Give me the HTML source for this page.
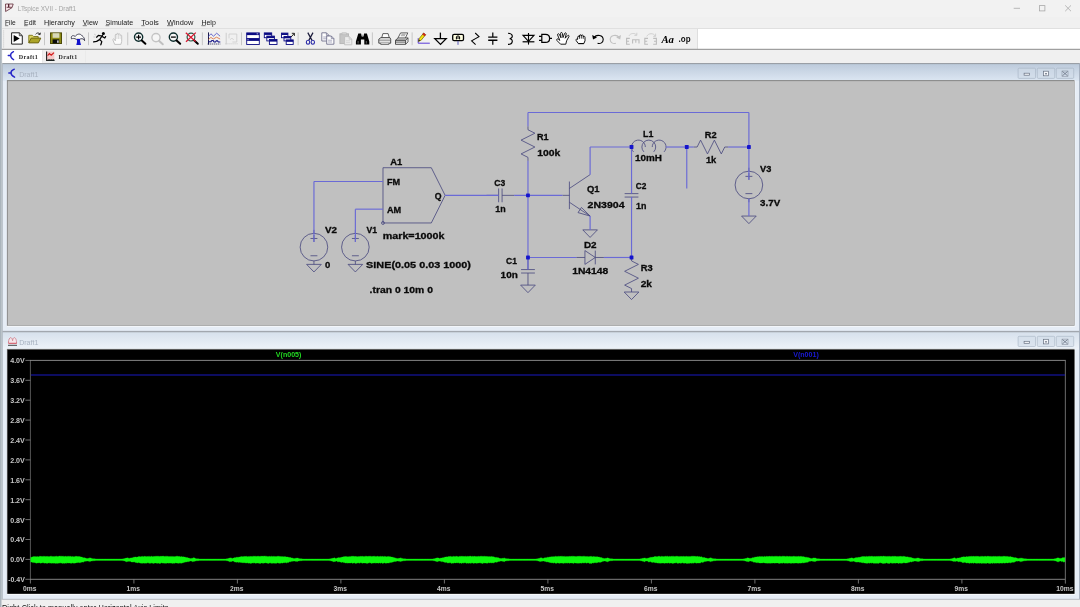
<!DOCTYPE html>
<html><head><meta charset="utf-8"><title>LTspice XVII - Draft1</title>
<style>html,body{margin:0;padding:0;background:#f0f0f0;overflow:hidden;font-family:"Liberation Sans",sans-serif}body{width:1080px;height:607px}svg{will-change:transform;transform:translateZ(0)}svg text{white-space:pre}</style></head>
<body>
<svg width="1080" height="607" viewBox="0 0 1080 607" style="display:block">
<rect x="0" y="0" width="1080" height="607" fill="#f0f0f0"/>
<rect x="0" y="0" width="1080" height="17" fill="#f2f2f2"/>
<rect x="0" y="0" width="1.5" height="607" fill="#aab4bc"/>
<path d="M5.5 4 L13.2 4 L12 7.7 L5.6 11.5 Z" fill="#f9e6ea" stroke="#54202c" stroke-width="0.75" stroke-linejoin="miter"/>
<path d="M8.7 4 V7.2" stroke="#4a1522" stroke-width="1.2" fill="none"/><path d="M6.6 7.3 H11.8" stroke="#54202c" stroke-width="0.8" fill="none"/>
<text x="17.8" y="10.6" font-family="'Liberation Sans', sans-serif" font-size="7.4" font-weight="normal" fill="#a4a4a4" textLength="58.3" lengthAdjust="spacingAndGlyphs" >LTspice XVII - Draft1</text>
<path d="M1013.7 8.3 h6.3" stroke="#a8a8a8" stroke-width="0.8"/>
<rect x="1039.6" y="5.6" width="5.3" height="5.3" fill="none" stroke="#a8a8a8" stroke-width="0.8"/>
<path d="M1065.2 5.4 l5.8 5.8 M1071 5.4 l-5.8 5.8" stroke="#a8a8a8" stroke-width="0.8"/>
<text x="5" y="24.6" font-family="'Liberation Sans', sans-serif" font-size="8" font-weight="normal" fill="#1a1a1a" textLength="10.7" lengthAdjust="spacingAndGlyphs" >File</text>
<rect x="5" y="25.5" width="3.2" height="0.6" fill="#333"/>
<text x="24" y="24.6" font-family="'Liberation Sans', sans-serif" font-size="8" font-weight="normal" fill="#1a1a1a" textLength="12" lengthAdjust="spacingAndGlyphs" >Edit</text>
<rect x="24" y="25.5" width="3.6" height="0.6" fill="#333"/>
<text x="44" y="24.6" font-family="'Liberation Sans', sans-serif" font-size="8" font-weight="normal" fill="#1a1a1a" textLength="31" lengthAdjust="spacingAndGlyphs" >Hierarchy</text>
<rect x="47.8" y="25.5" width="1.6" height="0.6" fill="#333"/>
<text x="82.7" y="24.6" font-family="'Liberation Sans', sans-serif" font-size="8" font-weight="normal" fill="#1a1a1a" textLength="15.3" lengthAdjust="spacingAndGlyphs" >View</text>
<rect x="82.7" y="25.5" width="4.2" height="0.6" fill="#333"/>
<text x="105.6" y="24.6" font-family="'Liberation Sans', sans-serif" font-size="8" font-weight="normal" fill="#1a1a1a" textLength="27.6" lengthAdjust="spacingAndGlyphs" >Simulate</text>
<rect x="105.6" y="25.5" width="3.6" height="0.6" fill="#333"/>
<text x="141.3" y="24.6" font-family="'Liberation Sans', sans-serif" font-size="8" font-weight="normal" fill="#1a1a1a" textLength="17.6" lengthAdjust="spacingAndGlyphs" >Tools</text>
<rect x="141.3" y="25.5" width="3.4" height="0.6" fill="#333"/>
<text x="167" y="24.6" font-family="'Liberation Sans', sans-serif" font-size="8" font-weight="normal" fill="#1a1a1a" textLength="26.3" lengthAdjust="spacingAndGlyphs" >Window</text>
<rect x="167" y="25.5" width="6" height="0.6" fill="#333"/>
<text x="201.4" y="24.6" font-family="'Liberation Sans', sans-serif" font-size="8" font-weight="normal" fill="#1a1a1a" textLength="14.4" lengthAdjust="spacingAndGlyphs" >Help</text>
<rect x="201.4" y="25.5" width="4.2" height="0.6" fill="#333"/>
<rect x="1.5" y="28.2" width="1078.5" height="0.8" fill="#dcdcdc"/>
<rect x="697.6" y="29" width="382.4" height="20" fill="#ffffff"/>
<rect x="697.2" y="29" width="0.7" height="20" fill="#d4d4d4"/>
<rect x="1.5" y="48.8" width="1078.5" height="1" fill="#8c8c8c"/>
<rect x="3.2" y="30.5" width="0.9" height="0.9" fill="#bdbdbd"/>
<rect x="3.2" y="32.5" width="0.9" height="0.9" fill="#bdbdbd"/>
<rect x="3.2" y="34.5" width="0.9" height="0.9" fill="#bdbdbd"/>
<rect x="3.2" y="36.5" width="0.9" height="0.9" fill="#bdbdbd"/>
<rect x="3.2" y="38.5" width="0.9" height="0.9" fill="#bdbdbd"/>
<rect x="3.2" y="40.5" width="0.9" height="0.9" fill="#bdbdbd"/>
<rect x="3.2" y="42.5" width="0.9" height="0.9" fill="#bdbdbd"/>
<rect x="3.2" y="44.5" width="0.9" height="0.9" fill="#bdbdbd"/>
<rect x="3.2" y="46.5" width="0.9" height="0.9" fill="#bdbdbd"/>
<rect x="2.5" y="50" width="39.5" height="13.4" fill="#ffffff"/>
<rect x="42" y="50.5" width="0.6" height="12" fill="#e2e2e2"/>
<rect x="85" y="50.5" width="0.6" height="12" fill="#e6e6e6"/>
<path d="M8.2 55.5 H10.8 M13.5 51.6 Q10.2 53.2 10.7 55.5 Q10.4 57.6 13.7 59.7" stroke="#2424c8" stroke-width="1.3" fill="none" stroke-linecap="round"/>
<text x="18.8" y="58.6" font-family="'Liberation Serif', sans-serif" font-size="6.8" font-weight="bold" fill="#2a2a2a" textLength="19.3" lengthAdjust="spacingAndGlyphs" letter-spacing="0.4">Draft1</text>
<rect x="46.3" y="51.6" width="8" height="8.6" fill="#f4c8c8"/>
<path d="M46.6 51.4 v9 h8" stroke="#222" stroke-width="1.1" fill="none"/>
<path d="M47.6 55.6 l1.8 -2 l1.8 1.6 l2.8 -2.6" stroke="#d01818" stroke-width="1.1" fill="none"/>
<path d="M48.4 59.9 h6" stroke="#183028" stroke-width="1.1" stroke-dasharray="1.3 0.8"/>
<text x="58.5" y="58.6" font-family="'Liberation Serif', sans-serif" font-size="6.8" font-weight="bold" fill="#2a2a2a" textLength="19" lengthAdjust="spacingAndGlyphs" letter-spacing="0.4">Draft1</text>
<g transform="translate(11.1,32.3)"><path d="M0.5 0.5 H8.2 L11.2 3.4 V11.8 H0.5 Z" fill="#fff" stroke="#222" stroke-width="1"/><path d="M8.2 0.5 V3.4 H11.2" fill="none" stroke="#222" stroke-width="0.8"/><path d="M2.6 2.6 L8.6 6.2 L2.6 9.8 Z" fill="#000"/></g>
<g transform="translate(28.2,32.3)"><path d="M0.6 10.6 V3 H4.2 L5.4 4.2 H10 V6" fill="#dcd460" stroke="#7a7418" stroke-width="0.9"/><path d="M0.6 10.6 L3 5.8 H12.6 L10.2 10.6 Z" fill="#aca428" stroke="#666010" stroke-width="0.9"/><path d="M7.4 2 C8.6 0.2 10.8 0.2 11.8 1.8 M12.2 0.4 L11.9 2.4 L10 1.9" fill="none" stroke="#222" stroke-width="0.9"/></g>
<rect x="44.0" y="32.4" width="0.8" height="12.8" fill="#bcbcbc"/>
<g transform="translate(50,32.4)"><rect x="0.5" y="0.5" width="11" height="10.6" fill="#8c8a14" stroke="#4c4a08" stroke-width="1"/><rect x="2.6" y="0.8" width="6.8" height="4.6" fill="#d8d8b8"/><rect x="2.6" y="7" width="6.6" height="4" fill="#0a0a0a"/><rect x="7.2" y="8" width="1.4" height="2.4" fill="#e8e8e8"/></g>
<rect x="66.1" y="32.4" width="0.8" height="12.8" fill="#bcbcbc"/>
<g transform="translate(70.8,32.3)"><path d="M0.7 6.6 C-0.3 3.6 2.2 2.4 4.4 4.2 C6 1.4 9.6 0.9 11.4 3.6 C12.8 4.6 13.8 6 13.8 8.4 C13 6.8 11.6 6.1 10 6.5 L8.8 7 H5.4 C3.8 5.8 1.9 6 0.7 6.6 Z" fill="#fbfbfb" stroke="#2a2a40" stroke-width="0.85"/><path d="M6.1 6.6 H9.1 L9.4 9.6 L10.2 12.6 H5.5 L6.2 9.6 Z" fill="#1212cc"/></g>
<rect x="88.0" y="32.4" width="0.8" height="12.8" fill="#bcbcbc"/>
<g transform="translate(93,32)"><circle cx="10.4" cy="1.6" r="1.5" fill="#000"/><path d="M9.6 3.2 L6.6 7.6 M9 4 L5.4 3.4 L3.6 5.2 M9 4.4 L11.8 6 L12.6 4.6 M6.6 7.6 L3.6 9.4 L0.6 9.8 M6.6 7.4 L8.8 9.6 L7.8 12.8" fill="none" stroke="#000" stroke-width="1.25" stroke-linecap="round" stroke-linejoin="round"/><path d="M1 2 l2 1.2 M0.4 5 h2" stroke="#bbb" stroke-width="0.6"/></g>
<g transform="translate(112.3,33)"><path d="M2.4 11.4 L0.6 7 C0.2 5.8 1.6 5.4 2.2 6.4 L3 7.8 V2 C3 0.9 4.6 0.9 4.6 2 V1.2 C4.6 0.1 6.2 0.1 6.2 1.2 V1.6 C6.2 0.6 7.8 0.6 7.8 1.8 V2.6 C7.8 1.8 9.4 1.8 9.4 2.8 V8.4 L8.6 11.4 Z" fill="#fbfbfb" stroke="#bdbdbd" stroke-width="0.9"/><path d="M4.6 2 V6 M6.2 1.6 V6 M7.8 2.4 V6" stroke="#cfcfcf" stroke-width="0.7"/></g>
<rect x="127.39999999999999" y="32.4" width="0.8" height="12.8" fill="#bcbcbc"/>
<g transform="translate(133,32)"><circle cx="5.6" cy="5.1" r="4.1" fill="#f6f6f6" stroke="#0c2c2c" stroke-width="1.4"/><path d="M3.2 5.1 H8 M5.6 2.7 V7.5" stroke="#000" stroke-width="1.2"/><path d="M8.8 8.4 L12.4 11.8" stroke="#000" stroke-width="2" stroke-linecap="round"/></g>
<g transform="translate(150.4,32.5)"><circle cx="5.6" cy="5.1" r="4.1" fill="#f6f6f6" stroke="#c4c4c4" stroke-width="1.4"/><path d="M8.8 8.4 L12.4 11.8" stroke="#c0c0c0" stroke-width="2" stroke-linecap="round"/></g>
<g transform="translate(167.8,32)"><circle cx="5.6" cy="5.1" r="4.1" fill="#f6f6f6" stroke="#0c2c2c" stroke-width="1.4"/><path d="M3.2 5.1 H8" stroke="#000" stroke-width="1.3"/><path d="M8.8 8.4 L12.4 11.8" stroke="#000" stroke-width="2" stroke-linecap="round"/></g>
<g transform="translate(185,32)"><circle cx="6" cy="5.1" r="3.9" fill="#f6f6f6" stroke="#2a5a4a" stroke-width="1.2"/><path d="M9 8.2 L12.8 11.8" stroke="#000" stroke-width="2" stroke-linecap="round"/><path d="M0.8 0.8 L10.6 9.6 M10.8 0.6 L1 9.8" stroke="#d81830" stroke-width="1.3"/></g>
<rect x="201.9" y="32.4" width="0.8" height="12.8" fill="#bcbcbc"/>
<g transform="translate(207.3,32.4)"><path d="M1.2 0 V12.2" stroke="#1a1a4a" stroke-width="1"/><path d="M1.2 4 L3.6 1.4 L6.2 3.8 L9.4 0.8 L12.8 3.8" fill="none" stroke="#5a5ac8" stroke-width="0.9"/><path d="M1.2 7 L3.6 5 L6 6.6 L9.2 4.8 L12.8 6.6" fill="none" stroke="#e07848" stroke-width="0.9"/><path d="M1.2 9.4 H4 V8.2 H6.4 V9.6 H8.6 V8.4 H10.6 V9.6 H13" fill="none" stroke="#0a0a82" stroke-width="1"/><path d="M0.4 11.6 H13" stroke="#1a1a4a" stroke-width="0.9" stroke-dasharray="1.1 0.9"/></g>
<g transform="translate(225,32.4)"><path d="M1.2 0.4 V12" stroke="#cacaca" stroke-width="0.9"/><path d="M0.4 11.4 H13" stroke="#cacaca" stroke-width="0.9" stroke-dasharray="1.1 0.9"/><path d="M4 1.6 H11.8 V9.6 H7.4 M4 1.6 V6 M5.4 7.4 C5.4 5.6 8.4 5.6 8.4 7.6" fill="none" stroke="#cfcfcf" stroke-width="0.9"/></g>
<rect x="241.2" y="32.4" width="0.8" height="12.8" fill="#bcbcbc"/>
<g transform="translate(246.2,32.5)"><rect x="0.5" y="0.4" width="12.6" height="5.6" fill="#fff" stroke="#0a0a82" stroke-width="0.9"/><rect x="0.5" y="0.4" width="12.6" height="2.20" fill="#0a0a82"/><rect x="0.5" y="6.2" width="12.6" height="5.8" fill="#fff" stroke="#0a0a82" stroke-width="0.9"/><rect x="0.5" y="6.2" width="12.6" height="2.20" fill="#0a0a82"/><rect x="10.4" y="0.9" width="1.6" height="0.9" fill="#c8c8e8"/><rect x="1.2" y="6.8" width="1.2" height="0.9" fill="#c8c8e8"/></g>
<g transform="translate(263.8,32.5)"><rect x="0.5" y="0.4" width="7.4" height="4.8" fill="#fff" stroke="#0a0a82" stroke-width="0.9"/><rect x="0.5" y="0.4" width="7.4" height="2.02" fill="#0a0a82"/><rect x="3" y="3.6" width="7.6" height="4.8" fill="#fff" stroke="#0a0a82" stroke-width="0.9"/><rect x="3" y="3.6" width="7.6" height="2.02" fill="#0a0a82"/><rect x="5.6" y="7" width="7.6" height="5" fill="#fff" stroke="#0a0a82" stroke-width="0.9"/><rect x="5.6" y="7" width="7.6" height="2.10" fill="#0a0a82"/></g>
<g transform="translate(281,32.5)"><rect x="0.5" y="0.6" width="6.4" height="4.6" fill="#fff" stroke="#0a0a82" stroke-width="0.9"/><rect x="0.5" y="0.6" width="6.4" height="1.93" fill="#0a0a82"/><rect x="3" y="4" width="6.8" height="4.4" fill="#fff" stroke="#0a0a82" stroke-width="0.9"/><rect x="3" y="4" width="6.8" height="1.85" fill="#0a0a82"/><rect x="5.2" y="7.4" width="7" height="4.6" fill="#fff" stroke="#0a0a82" stroke-width="0.9"/><rect x="5.2" y="7.4" width="7" height="1.93" fill="#0a0a82"/><path d="M10 4.6 L13.2 1 M10.8 0.8 H13.4 V3.4" fill="none" stroke="#111" stroke-width="0.9"/></g>
<rect x="297.70000000000005" y="32.4" width="0.8" height="12.8" fill="#bcbcbc"/>
<g transform="translate(305.6,32.4)"><path d="M2.2 0.2 L6.4 8 M7.4 0.2 L3.2 8" stroke="#1a1a3a" stroke-width="1.2"/><ellipse cx="2.4" cy="9.8" rx="1.7" ry="2" fill="none" stroke="#2828a8" stroke-width="1.1"/><ellipse cx="7.2" cy="9.8" rx="1.7" ry="2" fill="none" stroke="#2828a8" stroke-width="1.1"/></g>
<g transform="translate(321.3,32.4)"><path d="M0.5 0.4 h4.6 l2.6 2.6 v5.6 h-7.2 Z" fill="#fff" stroke="#70708c" stroke-width="0.9"/><path d="M5.1 0.4 v2.6 h2.6" fill="none" stroke="#70708c" stroke-width="0.7"/><path d="M1.9 4.6000000000000005 h4 M1.9 6.4 h4" stroke="#8a8aa8" stroke-width="0.7"/><path d="M5.4 3.6 h4.6 l2.6 2.6 v5.6 h-7.2 Z" fill="#fff" stroke="#70708c" stroke-width="0.9"/><path d="M10.0 3.6 v2.6 h2.6" fill="none" stroke="#70708c" stroke-width="0.7"/><path d="M6.800000000000001 7.800000000000001 h4 M6.800000000000001 9.6 h4" stroke="#8a8aa8" stroke-width="0.7"/></g>
<g transform="translate(339.4,32.4)"><rect x="0.5" y="1.4" width="8.6" height="9.8" fill="#c6c6c6" stroke="#b4b4b4" stroke-width="0.9"/><rect x="2.6" y="0.4" width="4.4" height="2" fill="#d4d4d4" stroke="#b8b8b8" stroke-width="0.6"/><path d="M5.2 4.2 h4.6 l2.6 2.6 v5.6 h-7.2 Z" fill="#ececec" stroke="#c0c0c0" stroke-width="0.9"/><path d="M9.8 4.2 v2.6 h2.6" fill="none" stroke="#c0c0c0" stroke-width="0.7"/><path d="M6.6 8.4 h4 M6.6 10.2 h4" stroke="#cfcfcf" stroke-width="0.7"/></g>
<g transform="translate(355.7,33)"><path d="M2.6 0.6 H5.4 L6 3.6 H7.8 L8.4 0.6 H11.2 L13.6 8.6 V11.4 H8.6 V6.4 H5.2 V11.4 H0.2 V8.6 Z" fill="#000"/><path d="M2.4 8 V10.6 M10.6 8 V10.6 M6.9 1.6 V3" stroke="#8a8a8a" stroke-width="0.7"/></g>
<rect x="371.90000000000003" y="32.4" width="0.8" height="12.8" fill="#bcbcbc"/>
<g transform="translate(378.3,33.2)"><path d="M3.4 4.6 L4.6 0.4 H9.8 L11 4.6" fill="#fdfdfd" stroke="#3a3a3a" stroke-width="0.8"/><path d="M0.5 10 V6 L2.6 4.4 H11.6 L12.4 6 V10 Z" fill="#e2e2e2" stroke="#3a3a3a" stroke-width="0.9"/><path d="M0.6 7 H12.2" stroke="#6a6a6a" stroke-width="0.7"/><path d="M2.4 10 V11.2 H10.6 V10" fill="#f8f8f8" stroke="#4a4a4a" stroke-width="0.8"/></g>
<g transform="translate(395,32.3)"><path d="M3 5.6 L5.6 0.6 H12.8 L10.4 5.6" fill="#fdfdfd" stroke="#3a3a3a" stroke-width="0.8"/><path d="M6.4 2 H10.6 M5.8 3.4 H10" stroke="#7a7a7a" stroke-width="0.7"/><path d="M0.5 8 L3 5.6 H13 L10.6 8 Z" fill="#d8d8d8" stroke="#3a3a3a" stroke-width="0.8"/><path d="M0.5 8 H10.6 V12 H0.5 Z" fill="#f4f4f4" stroke="#3a3a3a" stroke-width="0.9"/><path d="M10.6 12 L13 9.6 V5.6" fill="none" stroke="#3a3a3a" stroke-width="0.8"/><path d="M0.6 9.8 H10.4" stroke="#4a4a4a" stroke-width="0.9"/></g>
<rect x="411.70000000000005" y="32.4" width="0.8" height="12.8" fill="#bcbcbc"/>
<g transform="translate(417.6,32.2)"><path d="M0.6 6 V11 H12.2" fill="none" stroke="#5a3ad8" stroke-width="1"/><path d="M0.8 9.2 L1.6 6.4 L6 0.9 L8 2.5 L3.6 8 Z" fill="#f4e414" stroke="#6a6000" stroke-width="0.7"/><path d="M5 2.1 L6 0.9 L8 2.5 L7 3.7 Z" fill="#e02020" stroke="#a01010" stroke-width="0.5"/><path d="M0.8 9.2 L1.3 7.4 L2.6 8.5 Z" fill="#222"/></g>
<g transform="translate(434.4,32.4)"><path d="M6 0.2 V6" stroke="#000" stroke-width="1.3"/><path d="M0.4 6.2 H11.8 L6.1 12 Z" fill="none" stroke="#000" stroke-width="1.3" stroke-linejoin="miter"/></g>
<g transform="translate(452,33.6)"><rect x="0.7" y="0.7" width="10.8" height="6.4" rx="1.4" fill="#fdfde0" stroke="#000" stroke-width="1.3"/><path d="M4.4 5.8 V3.4 C4.4 2 7.6 2 7.6 3.4 V5.8 M4.4 4.4 H7.6" fill="none" stroke="#000" stroke-width="1"/><path d="M6 7.4 V11.2" stroke="#5a5ab8" stroke-width="1"/></g>
<g transform="translate(471,32.8)"><path d="M4.2 0.2 L8 3.8 L0.6 8 L4.6 11.8" fill="none" stroke="#000" stroke-width="1.05"/></g>
<g transform="translate(488,32.4)"><path d="M4.8 0.2 V4.6 M4.8 8 V12.4" stroke="#000" stroke-width="1.2"/><path d="M0.2 4.7 H9.4 M0.2 7.9 H9.4" stroke="#000" stroke-width="1.4"/></g>
<g transform="translate(507.6,32.8)"><path d="M0.4 0.4 C5.8 0.6 5.8 5.6 2 5.9 C5.8 6.2 5.8 11.4 0.4 11.6" fill="none" stroke="#000" stroke-width="1.15"/></g>
<g transform="translate(522.6,32.8)"><path d="M5.9 0.2 V11.8" stroke="#000" stroke-width="1.1"/><path d="M0.4 2.6 H11.4 L5.9 8.6 Z" fill="none" stroke="#000" stroke-width="1.1"/><path d="M0 9 H11.8" stroke="#000" stroke-width="1.2"/></g>
<g transform="translate(539,34)"><path d="M0 2.4 H2.8 M0 6.4 H2.8 M10.6 4.4 H13" stroke="#000" stroke-width="1.1"/><path d="M2.8 0.4 H6.4 C12 0.4 12 8.4 6.4 8.4 H2.8 Z" fill="none" stroke="#000" stroke-width="1.2"/></g>
<g transform="translate(556,32.2)"><path d="M4.6 12 L1 8.4 C0 7.2 1.4 6.2 2.4 7 L3.8 8.2 L1.6 2.8 C1.2 1.6 2.8 1 3.4 2.2 L5 5.6 L4.6 1.2 C4.6 0 6.2 0 6.4 1.2 L7 5.4 L8.6 1.2 C9 0.2 10.6 0.6 10.2 1.8 L9.2 6 L11.6 3.4 C12.4 2.6 13.6 3.6 12.8 4.6 L10.6 8.6 L9.8 12 Z" fill="#fff" stroke="#000" stroke-width="0.9" stroke-linejoin="round"/></g>
<g transform="translate(575.4,34.2)"><path d="M3 9.4 L0.8 6.4 C0 5.2 1.4 4.4 2.2 5.2 V3.2 C2.2 1.6 4 1.6 4 3 V1.8 C4 0.2 5.9 0.2 5.9 1.8 C5.9 0.2 7.8 0.4 7.8 2 V2.8 C7.8 1.6 9.6 1.8 9.6 3.2 V6.6 L8.4 9.4 Z" fill="#fff" stroke="#000" stroke-width="0.95" stroke-linejoin="round"/><path d="M4 3 V4.6 M5.9 1.8 V4.4 M7.8 2.8 V4.6 M3 9.4 H8.4" stroke="#000" stroke-width="0.8"/></g>
<g transform="translate(592,34)"><path d="M2.2 3.4 C4.6 0 11.2 1 11.2 5.6 C11.2 8.6 8.4 10 5.6 9.4" fill="none" stroke="#000" stroke-width="1.1"/><path d="M0.2 1 L1 5.4 L5 3.6 Z" fill="#000"/></g>
<g transform="translate(609.8,34)"><path d="M9.2 3.4 C6.8 0 0.4 1 0.4 5.6 C0.4 8.6 3.2 10 6 9.4" fill="none" stroke="#c2c2c2" stroke-width="1.1"/><path d="M11.2 1 L10.4 5.4 L6.4 3.6 Z" fill="#c2c2c2"/></g>
<g transform="translate(626,32.4)"><path d="M3.8 6 H0.6 V11.8 H3.8 M0.6 8.9 H3" fill="none" stroke="#bcbcbc" stroke-width="1.1"/><path d="M6.6 11 V7.4 H13 V11 M9.8 7.4 V10.4" fill="none" stroke="#bcbcbc" stroke-width="1.1"/><path d="M3 3.4 C4.4 0.6 9 0.4 10.4 2.4 M10.8 0.4 V3 H8.4" fill="none" stroke="#c8c8c8" stroke-width="0.8"/></g>
<g transform="translate(644.2,32.4)"><path d="M3.8 6 H0.6 V11.8 H3.8 M0.6 8.9 H3" fill="none" stroke="#bcbcbc" stroke-width="1.1"/><path d="M9 6 H12.2 V11.8 H9 M12.2 8.9 H9.8" fill="none" stroke="#bcbcbc" stroke-width="1.1"/><path d="M2.6 4 C4 0.6 9.6 0.4 11 3.6 M11.4 1.2 V4 H9" fill="none" stroke="#c8c8c8" stroke-width="0.8"/></g>
<text x="661.4" y="43.4" font-family="'Liberation Serif', serif" font-size="10.5" font-weight="bold" font-style="italic" fill="#000" textLength="12.6" lengthAdjust="spacingAndGlyphs">Aa</text>
<text x="678.6" y="42.2" font-family="'Liberation Sans', sans-serif" font-size="8.6" font-weight="bold" fill="#111" textLength="12" lengthAdjust="spacingAndGlyphs">.op</text>
<defs><linearGradient id="g1" x1="0" y1="0" x2="0" y2="1"><stop offset="0" stop-color="#bccadb"/><stop offset="1" stop-color="#dce6f2"/></linearGradient></defs>
<rect x="2.3" y="63.6" width="1077.5" height="267.7" fill="#e6edf6"/>
<rect x="2.3" y="63.6" width="1077.5" height="17.199999999999996" fill="url(#g1)"/>
<rect x="2.3" y="63.2" width="1077.5" height="0.9" fill="#8a8f96"/>
<rect x="2.2" y="63.6" width="0.7" height="267.7" fill="#aab2bc"/>
<rect x="1079.2" y="63.6" width="0.8" height="267.7" fill="#9aa6b6"/>
<rect x="2.3" y="330.8" width="1077.5" height="0.6" fill="#b4becb"/>
<rect x="6.9" y="80.2" width="1068.4" height="246.49999999999997" fill="#f8fafc"/>
<rect x="6.9" y="80.2" width="1067.6" height="245.49999999999997" fill="#747474"/>
<rect x="7.6" y="81.1" width="1066.8" height="244.39999999999998" fill="#c0c0c0"/>
<rect x="1018.1" y="68.2" width="17.4" height="10.2" rx="1" fill="#d0dae7" fill-opacity="0.55" stroke="#a2aebf" stroke-width="0.55"/>
<rect x="1024.1" y="73.2" width="5.4" height="2" fill="#f4f6fa" stroke="#667080" stroke-width="0.7"/>
<rect x="1037.3" y="68.2" width="17.4" height="10.2" rx="1" fill="#d0dae7" fill-opacity="0.55" stroke="#a2aebf" stroke-width="0.55"/>
<rect x="1043.5" y="71.2" width="5" height="4.6" fill="#f4f6fa" stroke="#667080" stroke-width="0.7"/>
<rect x="1045.2" y="73.00000000000001" width="1.6" height="1.4" fill="#6a7280"/>
<rect x="1056.3" y="68.2" width="17.4" height="10.2" rx="1" fill="#d0dae7" fill-opacity="0.55" stroke="#a2aebf" stroke-width="0.55"/>
<path d="M1062.4 71.4 l5.2 4.4 M1067.6 71.4 l-5.2 4.4" stroke="#707a8a" stroke-width="0.9"/>
<rect x="1062.0" y="71.00000000000001" width="6" height="5.2" fill="none" stroke="#7a8290" stroke-width="0.5"/>
<path d="M8.8 73.0 H11.2 M14.3 69.2 Q10.6 70.8 11.1 73.0 Q10.8 75.2 14.6 77.2" stroke="#2424c8" stroke-width="1.4" fill="none" stroke-linecap="round"/>
<text x="19.2" y="76.8" font-family="'Liberation Sans', sans-serif" font-size="7.6" font-weight="normal" fill="#a8b2c0" textLength="19.2" lengthAdjust="spacingAndGlyphs" >Draft1</text>
<g transform="translate(748.9,112.5) scale(0.4315)">
<path d="M-512 32 L-512 40 L-496 48 L-528 64 L-496 80 L-528 96 L-512 104 L-512 112" stroke="#48487e" stroke-width="1.9" fill="none" stroke-linejoin="round" stroke-linecap="butt"/>
<path d="M-128 80 L-120 80 L-112 64 L-96 96 L-80 64 L-64 96 L-56 80 L-48 80" stroke="#48487e" stroke-width="1.9" fill="none" stroke-linejoin="round" stroke-linecap="butt"/>
<path d="M-272 336 L-272 344 L-256 352 L-288 368 L-256 384 L-288 400 L-272 408 L-272 416" stroke="#48487e" stroke-width="1.9" fill="none" stroke-linejoin="round" stroke-linecap="butt"/>
<path d="M-512 336 L-512 364" stroke="#48487e" stroke-width="1.9" fill="none" stroke-linejoin="round" stroke-linecap="butt"/><path d="M-528 364 L-496 364" stroke="#48487e" stroke-width="1.9" fill="none" stroke-linejoin="round" stroke-linecap="butt"/><path d="M-528 372 L-496 372" stroke="#48487e" stroke-width="1.9" fill="none" stroke-linejoin="round" stroke-linecap="butt"/><path d="M-512 372 L-512 400" stroke="#48487e" stroke-width="1.9" fill="none" stroke-linejoin="round" stroke-linecap="butt"/>
<path d="M-272 160 L-272 188" stroke="#48487e" stroke-width="1.9" fill="none" stroke-linejoin="round" stroke-linecap="butt"/><path d="M-288 188 L-256 188" stroke="#48487e" stroke-width="1.9" fill="none" stroke-linejoin="round" stroke-linecap="butt"/><path d="M-288 196 L-256 196" stroke="#48487e" stroke-width="1.9" fill="none" stroke-linejoin="round" stroke-linecap="butt"/><path d="M-272 196 L-272 224" stroke="#48487e" stroke-width="1.9" fill="none" stroke-linejoin="round" stroke-linecap="butt"/>
<path d="M-608 192 L-580 192" stroke="#48487e" stroke-width="1.9" fill="none" stroke-linejoin="round" stroke-linecap="butt"/><path d="M-580 176 L-580 208" stroke="#48487e" stroke-width="1.9" fill="none" stroke-linejoin="round" stroke-linecap="butt"/><path d="M-572 176 L-572 208" stroke="#48487e" stroke-width="1.9" fill="none" stroke-linejoin="round" stroke-linecap="butt"/><path d="M-572 192 L-544 192" stroke="#48487e" stroke-width="1.9" fill="none" stroke-linejoin="round" stroke-linecap="butt"/>
<path d="M-240 80 A16 16 0 1 0 -267.3 91.3 M-220.7 91.3 A16 16 0 1 0 -243.3 91.3 M-196.7 91.3 A16 16 0 1 0 -224 80" stroke="#48487e" stroke-width="1.9" fill="none"/>
<path d="M-400 336 L-380 336" stroke="#48487e" stroke-width="1.9" fill="none" stroke-linejoin="round" stroke-linecap="butt"/><path d="M-380 320 L-380 352 L-356 336 Z" stroke="#48487e" stroke-width="1.9" fill="none" stroke-linejoin="round" stroke-linecap="butt"/><path d="M-356 320 L-356 352" stroke="#48487e" stroke-width="1.9" fill="none" stroke-linejoin="round" stroke-linecap="butt"/><path d="M-356 336 L-336 336" stroke="#48487e" stroke-width="1.9" fill="none" stroke-linejoin="round" stroke-linecap="butt"/>
<path d="M-416 160 L-416 224" stroke="#48487e" stroke-width="1.9" fill="none" stroke-linejoin="round" stroke-linecap="butt"/><path d="M-432 192 L-416 192" stroke="#48487e" stroke-width="1.9" fill="none" stroke-linejoin="round" stroke-linecap="butt"/><path d="M-416 176 L-368 144" stroke="#48487e" stroke-width="1.9" fill="none" stroke-linejoin="round" stroke-linecap="butt"/><path d="M-416 208 L-368 240" stroke="#48487e" stroke-width="1.9" fill="none" stroke-linejoin="round" stroke-linecap="butt"/><path d="M-388 220 L-396 232 L-368 240 Z" stroke="#48487e" stroke-width="1.9" fill="none" stroke-linejoin="round" stroke-linecap="butt"/>
<circle cx="0" cy="168" r="32" stroke="#48487e" stroke-width="1.9" fill="none"/><path d="M0 128 L0 136" stroke="#48487e" stroke-width="1.9" fill="none" stroke-linejoin="round" stroke-linecap="butt"/><path d="M0 200 L0 208" stroke="#48487e" stroke-width="1.9" fill="none" stroke-linejoin="round" stroke-linecap="butt"/><path d="M-8 148 L8 148" stroke="#48487e" stroke-width="1.9" fill="none" stroke-linejoin="round" stroke-linecap="butt"/><path d="M0 140 L0 156" stroke="#48487e" stroke-width="1.9" fill="none" stroke-linejoin="round" stroke-linecap="butt"/><path d="M-8 188 L8 188" stroke="#48487e" stroke-width="1.9" fill="none" stroke-linejoin="round" stroke-linecap="butt"/>
<circle cx="-1008" cy="312" r="32" stroke="#48487e" stroke-width="1.9" fill="none"/><path d="M-1008 272 L-1008 280" stroke="#48487e" stroke-width="1.9" fill="none" stroke-linejoin="round" stroke-linecap="butt"/><path d="M-1008 344 L-1008 352" stroke="#48487e" stroke-width="1.9" fill="none" stroke-linejoin="round" stroke-linecap="butt"/><path d="M-1016 292 L-1000 292" stroke="#48487e" stroke-width="1.9" fill="none" stroke-linejoin="round" stroke-linecap="butt"/><path d="M-1008 284 L-1008 300" stroke="#48487e" stroke-width="1.9" fill="none" stroke-linejoin="round" stroke-linecap="butt"/><path d="M-1016 332 L-1000 332" stroke="#48487e" stroke-width="1.9" fill="none" stroke-linejoin="round" stroke-linecap="butt"/>
<circle cx="-912" cy="312" r="32" stroke="#48487e" stroke-width="1.9" fill="none"/><path d="M-912 272 L-912 280" stroke="#48487e" stroke-width="1.9" fill="none" stroke-linejoin="round" stroke-linecap="butt"/><path d="M-912 344 L-912 352" stroke="#48487e" stroke-width="1.9" fill="none" stroke-linejoin="round" stroke-linecap="butt"/><path d="M-920 292 L-904 292" stroke="#48487e" stroke-width="1.9" fill="none" stroke-linejoin="round" stroke-linecap="butt"/><path d="M-912 284 L-912 300" stroke="#48487e" stroke-width="1.9" fill="none" stroke-linejoin="round" stroke-linecap="butt"/><path d="M-920 332 L-904 332" stroke="#48487e" stroke-width="1.9" fill="none" stroke-linejoin="round" stroke-linecap="butt"/>
<path d="M-17 240 L17 240 L0 257.5 Z" stroke="#48487e" stroke-width="1.9" fill="none" stroke-linejoin="round" stroke-linecap="butt"/>
<path d="M-385 272 L-351 272 L-368 289.5 Z" stroke="#48487e" stroke-width="1.9" fill="none" stroke-linejoin="round" stroke-linecap="butt"/>
<path d="M-529 400 L-495 400 L-512 417.5 Z" stroke="#48487e" stroke-width="1.9" fill="none" stroke-linejoin="round" stroke-linecap="butt"/>
<path d="M-289 416 L-255 416 L-272 433.5 Z" stroke="#48487e" stroke-width="1.9" fill="none" stroke-linejoin="round" stroke-linecap="butt"/>
<path d="M-1025 352 L-991 352 L-1008 369.5 Z" stroke="#48487e" stroke-width="1.9" fill="none" stroke-linejoin="round" stroke-linecap="butt"/>
<path d="M-929 352 L-895 352 L-912 369.5 Z" stroke="#48487e" stroke-width="1.9" fill="none" stroke-linejoin="round" stroke-linecap="butt"/>
<path d="M-848 128 L-736 128 L-704 192 L-736 256 L-848 256 Z" stroke="#48487e" stroke-width="1.9" fill="none" stroke-linejoin="round" stroke-linecap="butt"/>
<circle cx="-848" cy="256" r="3.4" stroke="#48487e" stroke-width="1.9" fill="none"/>
<path d="M-512 0 L0 0" stroke="#6a6ad6" stroke-width="2.7" fill="none" stroke-linejoin="round" stroke-linecap="butt"/>
<path d="M0 0 L0 156" stroke="#6a6ad6" stroke-width="2.7" fill="none" stroke-linejoin="round" stroke-linecap="butt"/>
<path d="M-512 0 L-512 32" stroke="#6a6ad6" stroke-width="2.7" fill="none" stroke-linejoin="round" stroke-linecap="butt"/>
<path d="M-512 112 L-512 364" stroke="#6a6ad6" stroke-width="2.7" fill="none" stroke-linejoin="round" stroke-linecap="butt"/>
<path d="M-144 80 L-128 80" stroke="#6a6ad6" stroke-width="2.7" fill="none" stroke-linejoin="round" stroke-linecap="butt"/>
<path d="M-48 80 L0 80" stroke="#6a6ad6" stroke-width="2.7" fill="none" stroke-linejoin="round" stroke-linecap="butt"/>
<path d="M-192 80 L-144 80" stroke="#6a6ad6" stroke-width="2.7" fill="none" stroke-linejoin="round" stroke-linecap="butt"/>
<path d="M-144 80 L-144 176" stroke="#6a6ad6" stroke-width="2.7" fill="none" stroke-linejoin="round" stroke-linecap="butt"/>
<path d="M-368 80 L-272 80" stroke="#6a6ad6" stroke-width="2.7" fill="none" stroke-linejoin="round" stroke-linecap="butt"/>
<path d="M-368 80 L-368 144" stroke="#6a6ad6" stroke-width="2.7" fill="none" stroke-linejoin="round" stroke-linecap="butt"/>
<path d="M-272 80 L-272 188" stroke="#6a6ad6" stroke-width="2.7" fill="none" stroke-linejoin="round" stroke-linecap="butt"/>
<path d="M-272 196 L-272 336" stroke="#6a6ad6" stroke-width="2.7" fill="none" stroke-linejoin="round" stroke-linecap="butt"/>
<path d="M-336 336 L-272 336" stroke="#6a6ad6" stroke-width="2.7" fill="none" stroke-linejoin="round" stroke-linecap="butt"/>
<path d="M-512 336 L-400 336" stroke="#6a6ad6" stroke-width="2.7" fill="none" stroke-linejoin="round" stroke-linecap="butt"/>
<path d="M-544 192 L-432 192" stroke="#6a6ad6" stroke-width="2.7" fill="none" stroke-linejoin="round" stroke-linecap="butt"/>
<path d="M-704 192 L-580 192" stroke="#6a6ad6" stroke-width="2.7" fill="none" stroke-linejoin="round" stroke-linecap="butt"/>
<path d="M-368 240 L-368 272" stroke="#6a6ad6" stroke-width="2.7" fill="none" stroke-linejoin="round" stroke-linecap="butt"/>
<path d="M0 200 L0 240" stroke="#6a6ad6" stroke-width="2.7" fill="none" stroke-linejoin="round" stroke-linecap="butt"/>
<path d="M-1008 160 L-848 160" stroke="#6a6ad6" stroke-width="2.7" fill="none" stroke-linejoin="round" stroke-linecap="butt"/>
<path d="M-1008 160 L-1008 300" stroke="#6a6ad6" stroke-width="2.7" fill="none" stroke-linejoin="round" stroke-linecap="butt"/>
<path d="M-912 224 L-848 224" stroke="#6a6ad6" stroke-width="2.7" fill="none" stroke-linejoin="round" stroke-linecap="butt"/>
<path d="M-912 224 L-912 300" stroke="#6a6ad6" stroke-width="2.7" fill="none" stroke-linejoin="round" stroke-linecap="butt"/>
<rect x="-4.4" y="75.6" width="8.8" height="8.8" rx="1" fill="#1414cc"/>
<rect x="-148.4" y="75.6" width="8.8" height="8.8" rx="1" fill="#1414cc"/>
<rect x="-276.4" y="75.6" width="8.8" height="8.8" rx="1" fill="#1414cc"/>
<rect x="-516.4" y="187.6" width="8.8" height="8.8" rx="1" fill="#1414cc"/>
<rect x="-516.4" y="331.6" width="8.8" height="8.8" rx="1" fill="#1414cc"/>
<rect x="-276.4" y="331.6" width="8.8" height="8.8" rx="1" fill="#1414cc"/>
</g>
<text x="390.2" y="164.5" font-family="'Liberation Sans', sans-serif" font-size="8.7" font-weight="bold" fill="#0a0a0a" stroke="#0a0a0a" stroke-width="0.28" textLength="12.0" lengthAdjust="spacingAndGlyphs">A1</text>
<text x="387" y="184.9" font-family="'Liberation Sans', sans-serif" font-size="8.7" font-weight="bold" fill="#0a0a0a" stroke="#0a0a0a" stroke-width="0.28" textLength="13.2" lengthAdjust="spacingAndGlyphs">FM</text>
<text x="387" y="212.7" font-family="'Liberation Sans', sans-serif" font-size="8.7" font-weight="bold" fill="#0a0a0a" stroke="#0a0a0a" stroke-width="0.28" textLength="14.2" lengthAdjust="spacingAndGlyphs">AM</text>
<text x="434.8" y="199.2" font-family="'Liberation Sans', sans-serif" font-size="8.7" font-weight="bold" fill="#0a0a0a" stroke="#0a0a0a" stroke-width="0.28" textLength="6.8" lengthAdjust="spacingAndGlyphs">Q</text>
<text x="494.3" y="186" font-family="'Liberation Sans', sans-serif" font-size="8.7" font-weight="bold" fill="#0a0a0a" stroke="#0a0a0a" stroke-width="0.28" textLength="10.9" lengthAdjust="spacingAndGlyphs">C3</text>
<text x="495.2" y="211.6" font-family="'Liberation Sans', sans-serif" font-size="8.7" font-weight="bold" fill="#0a0a0a" stroke="#0a0a0a" stroke-width="0.28" textLength="10.4" lengthAdjust="spacingAndGlyphs">1n</text>
<text x="537" y="140.3" font-family="'Liberation Sans', sans-serif" font-size="8.7" font-weight="bold" fill="#0a0a0a" stroke="#0a0a0a" stroke-width="0.28" textLength="11.6" lengthAdjust="spacingAndGlyphs">R1</text>
<text x="537.3" y="155.7" font-family="'Liberation Sans', sans-serif" font-size="8.7" font-weight="bold" fill="#0a0a0a" stroke="#0a0a0a" stroke-width="0.28" textLength="23.1" lengthAdjust="spacingAndGlyphs">100k</text>
<text x="643" y="137.2" font-family="'Liberation Sans', sans-serif" font-size="8.7" font-weight="bold" fill="#0a0a0a" stroke="#0a0a0a" stroke-width="0.28" textLength="10.3" lengthAdjust="spacingAndGlyphs">L1</text>
<text x="635.1" y="160.7" font-family="'Liberation Sans', sans-serif" font-size="8.7" font-weight="bold" fill="#0a0a0a" stroke="#0a0a0a" stroke-width="0.28" textLength="26.9" lengthAdjust="spacingAndGlyphs">10mH</text>
<text x="704.8" y="137.6" font-family="'Liberation Sans', sans-serif" font-size="8.7" font-weight="bold" fill="#0a0a0a" stroke="#0a0a0a" stroke-width="0.28" textLength="11.8" lengthAdjust="spacingAndGlyphs">R2</text>
<text x="705.9" y="162.6" font-family="'Liberation Sans', sans-serif" font-size="8.7" font-weight="bold" fill="#0a0a0a" stroke="#0a0a0a" stroke-width="0.28" textLength="10.4" lengthAdjust="spacingAndGlyphs">1k</text>
<text x="760.1" y="171.5" font-family="'Liberation Sans', sans-serif" font-size="8.7" font-weight="bold" fill="#0a0a0a" stroke="#0a0a0a" stroke-width="0.28" textLength="11.3" lengthAdjust="spacingAndGlyphs">V3</text>
<text x="760.1" y="205.7" font-family="'Liberation Sans', sans-serif" font-size="8.7" font-weight="bold" fill="#0a0a0a" stroke="#0a0a0a" stroke-width="0.28" textLength="20.1" lengthAdjust="spacingAndGlyphs">3.7V</text>
<text x="587" y="192" font-family="'Liberation Sans', sans-serif" font-size="8.7" font-weight="bold" fill="#0a0a0a" stroke="#0a0a0a" stroke-width="0.28" textLength="12.5" lengthAdjust="spacingAndGlyphs">Q1</text>
<text x="587.6" y="207.6" font-family="'Liberation Sans', sans-serif" font-size="8.7" font-weight="bold" fill="#0a0a0a" stroke="#0a0a0a" stroke-width="0.28" textLength="37.0" lengthAdjust="spacingAndGlyphs">2N3904</text>
<text x="635.8" y="188.9" font-family="'Liberation Sans', sans-serif" font-size="8.7" font-weight="bold" fill="#0a0a0a" stroke="#0a0a0a" stroke-width="0.28" textLength="10.6" lengthAdjust="spacingAndGlyphs">C2</text>
<text x="636" y="208.8" font-family="'Liberation Sans', sans-serif" font-size="8.7" font-weight="bold" fill="#0a0a0a" stroke="#0a0a0a" stroke-width="0.28" textLength="10.4" lengthAdjust="spacingAndGlyphs">1n</text>
<text x="583.9" y="247.9" font-family="'Liberation Sans', sans-serif" font-size="8.7" font-weight="bold" fill="#0a0a0a" stroke="#0a0a0a" stroke-width="0.28" textLength="12.6" lengthAdjust="spacingAndGlyphs">D2</text>
<text x="572.2" y="273.8" font-family="'Liberation Sans', sans-serif" font-size="8.7" font-weight="bold" fill="#0a0a0a" stroke="#0a0a0a" stroke-width="0.28" textLength="36.1" lengthAdjust="spacingAndGlyphs">1N4148</text>
<text x="506" y="263.6" font-family="'Liberation Sans', sans-serif" font-size="8.7" font-weight="bold" fill="#0a0a0a" stroke="#0a0a0a" stroke-width="0.28" textLength="10.9" lengthAdjust="spacingAndGlyphs">C1</text>
<text x="500.6" y="277.6" font-family="'Liberation Sans', sans-serif" font-size="8.7" font-weight="bold" fill="#0a0a0a" stroke="#0a0a0a" stroke-width="0.28" textLength="17.2" lengthAdjust="spacingAndGlyphs">10n</text>
<text x="640.7" y="271.3" font-family="'Liberation Sans', sans-serif" font-size="8.7" font-weight="bold" fill="#0a0a0a" stroke="#0a0a0a" stroke-width="0.28" textLength="11.9" lengthAdjust="spacingAndGlyphs">R3</text>
<text x="640.7" y="286.7" font-family="'Liberation Sans', sans-serif" font-size="8.7" font-weight="bold" fill="#0a0a0a" stroke="#0a0a0a" stroke-width="0.28" textLength="11.3" lengthAdjust="spacingAndGlyphs">2k</text>
<text x="325" y="233.1" font-family="'Liberation Sans', sans-serif" font-size="8.7" font-weight="bold" fill="#0a0a0a" stroke="#0a0a0a" stroke-width="0.28" textLength="12" lengthAdjust="spacingAndGlyphs">V2</text>
<text x="325" y="268.2" font-family="'Liberation Sans', sans-serif" font-size="8.7" font-weight="bold" fill="#0a0a0a" stroke="#0a0a0a" stroke-width="0.28" textLength="5.3" lengthAdjust="spacingAndGlyphs">0</text>
<text x="366.4" y="233.1" font-family="'Liberation Sans', sans-serif" font-size="8.7" font-weight="bold" fill="#0a0a0a" stroke="#0a0a0a" stroke-width="0.28" textLength="10.6" lengthAdjust="spacingAndGlyphs">V1</text>
<text x="366.1" y="268.4" font-family="'Liberation Sans', sans-serif" font-size="8.7" font-weight="bold" fill="#0a0a0a" stroke="#0a0a0a" stroke-width="0.28" textLength="104.9" lengthAdjust="spacingAndGlyphs">SINE(0.05 0.03 1000)</text>
<text x="382.7" y="239.2" font-family="'Liberation Sans', sans-serif" font-size="8.7" font-weight="bold" fill="#0a0a0a" stroke="#0a0a0a" stroke-width="0.28" textLength="61.8" lengthAdjust="spacingAndGlyphs">mark=1000k</text>
<text x="369.6" y="293.2" font-family="'Liberation Sans', sans-serif" font-size="8.7" font-weight="bold" fill="#0a0a0a" stroke="#0a0a0a" stroke-width="0.28" textLength="63.3" lengthAdjust="spacingAndGlyphs">.tran 0 10m 0</text>
<defs><linearGradient id="g2" x1="0" y1="0" x2="0" y2="1"><stop offset="0" stop-color="#d6e0ec"/><stop offset="1" stop-color="#eef3f9"/></linearGradient></defs>
<rect x="2.3" y="331.7" width="1077.5" height="267.59999999999997" fill="#e6edf6"/>
<rect x="2.3" y="331.7" width="1077.5" height="17.80000000000001" fill="url(#g2)"/>
<rect x="2.3" y="331.3" width="1077.5" height="0.9" fill="#8a8f96"/>
<rect x="2.2" y="331.7" width="0.7" height="267.59999999999997" fill="#aab2bc"/>
<rect x="1079.2" y="331.7" width="0.8" height="267.59999999999997" fill="#9aa6b6"/>
<rect x="2.3" y="598.8" width="1077.5" height="0.6" fill="#b4becb"/>
<rect x="6.9" y="348.9" width="1068.4" height="246.00000000000003" fill="#f8fafc"/>
<rect x="6.9" y="348.9" width="1067.6" height="245.00000000000003" fill="#747474"/>
<rect x="7.6" y="349.8" width="1066.8" height="243.90000000000003" fill="#000000"/>
<rect x="1018.1" y="336.3" width="17.4" height="10.2" rx="1" fill="#d0dae7" fill-opacity="0.55" stroke="#a2aebf" stroke-width="0.55"/>
<rect x="1024.1" y="341.3" width="5.4" height="2" fill="#f4f6fa" stroke="#667080" stroke-width="0.7"/>
<rect x="1037.3" y="336.3" width="17.4" height="10.2" rx="1" fill="#d0dae7" fill-opacity="0.55" stroke="#a2aebf" stroke-width="0.55"/>
<rect x="1043.5" y="339.3" width="5" height="4.6" fill="#f4f6fa" stroke="#667080" stroke-width="0.7"/>
<rect x="1045.2" y="341.09999999999997" width="1.6" height="1.4" fill="#6a7280"/>
<rect x="1056.3" y="336.3" width="17.4" height="10.2" rx="1" fill="#d0dae7" fill-opacity="0.55" stroke="#a2aebf" stroke-width="0.55"/>
<path d="M1062.4 339.5 l5.2 4.4 M1067.6 339.5 l-5.2 4.4" stroke="#707a8a" stroke-width="0.9"/>
<rect x="1062.0" y="339.09999999999997" width="6" height="5.2" fill="none" stroke="#7a8290" stroke-width="0.5"/>
<path d="M8.4 343.09999999999997 C8.6 336.3 12 336.3 12.6 340.7 C13 336.3 16.4 336.3 16.6 343.09999999999997" stroke="#cf8290" stroke-width="0.9" fill="#f6e6ea"/>
<path d="M8 345.3 h9" stroke="#333" stroke-width="0.9"/>
<path d="M8.4 343.3 h8.4" stroke="#cc2233" stroke-width="0.8"/>
<text x="19.2" y="344.9" font-family="'Liberation Sans', sans-serif" font-size="7.6" font-weight="normal" fill="#a8b2c0" textLength="19.2" lengthAdjust="spacingAndGlyphs" >Draft1</text>
<path d="M30.4 360.4 V579.3 M1065.4 360.4 V579.3" stroke="#606060" stroke-width="0.9" fill="none"/>
<path d="M30.0 360.4 H1065.8000000000002 M30.0 579.3 H1065.8000000000002" stroke="#929292" stroke-width="0.9" fill="none"/>
<path d="M25.4 360.40 H30.4" stroke="#8c8c8c" stroke-width="0.8"/>
<text x="10.2" y="363.3" font-family="'Liberation Sans', sans-serif" font-size="8" font-weight="bold" fill="#c6c6c6" textLength="14.6" lengthAdjust="spacingAndGlyphs">4.0V</text>
<path d="M25.4 380.30 H30.4" stroke="#8c8c8c" stroke-width="0.8"/>
<text x="10.2" y="383.2" font-family="'Liberation Sans', sans-serif" font-size="8" font-weight="bold" fill="#c6c6c6" textLength="14.6" lengthAdjust="spacingAndGlyphs">3.6V</text>
<path d="M25.4 400.20 H30.4" stroke="#8c8c8c" stroke-width="0.8"/>
<text x="10.2" y="403.1" font-family="'Liberation Sans', sans-serif" font-size="8" font-weight="bold" fill="#c6c6c6" textLength="14.6" lengthAdjust="spacingAndGlyphs">3.2V</text>
<path d="M25.4 420.10 H30.4" stroke="#8c8c8c" stroke-width="0.8"/>
<text x="10.2" y="423.0" font-family="'Liberation Sans', sans-serif" font-size="8" font-weight="bold" fill="#c6c6c6" textLength="14.6" lengthAdjust="spacingAndGlyphs">2.8V</text>
<path d="M25.4 440.00 H30.4" stroke="#8c8c8c" stroke-width="0.8"/>
<text x="10.2" y="442.9" font-family="'Liberation Sans', sans-serif" font-size="8" font-weight="bold" fill="#c6c6c6" textLength="14.6" lengthAdjust="spacingAndGlyphs">2.4V</text>
<path d="M25.4 459.90 H30.4" stroke="#8c8c8c" stroke-width="0.8"/>
<text x="10.2" y="462.8" font-family="'Liberation Sans', sans-serif" font-size="8" font-weight="bold" fill="#c6c6c6" textLength="14.6" lengthAdjust="spacingAndGlyphs">2.0V</text>
<path d="M25.4 479.80 H30.4" stroke="#8c8c8c" stroke-width="0.8"/>
<text x="10.2" y="482.7" font-family="'Liberation Sans', sans-serif" font-size="8" font-weight="bold" fill="#c6c6c6" textLength="14.6" lengthAdjust="spacingAndGlyphs">1.6V</text>
<path d="M25.4 499.70 H30.4" stroke="#8c8c8c" stroke-width="0.8"/>
<text x="10.2" y="502.6" font-family="'Liberation Sans', sans-serif" font-size="8" font-weight="bold" fill="#c6c6c6" textLength="14.6" lengthAdjust="spacingAndGlyphs">1.2V</text>
<path d="M25.4 519.60 H30.4" stroke="#8c8c8c" stroke-width="0.8"/>
<text x="10.2" y="522.5" font-family="'Liberation Sans', sans-serif" font-size="8" font-weight="bold" fill="#c6c6c6" textLength="14.6" lengthAdjust="spacingAndGlyphs">0.8V</text>
<path d="M25.4 539.50 H30.4" stroke="#8c8c8c" stroke-width="0.8"/>
<text x="10.2" y="542.4" font-family="'Liberation Sans', sans-serif" font-size="8" font-weight="bold" fill="#c6c6c6" textLength="14.6" lengthAdjust="spacingAndGlyphs">0.4V</text>
<path d="M25.4 559.40 H30.4" stroke="#8c8c8c" stroke-width="0.8"/>
<text x="10.2" y="562.3" font-family="'Liberation Sans', sans-serif" font-size="8" font-weight="bold" fill="#c6c6c6" textLength="14.6" lengthAdjust="spacingAndGlyphs">0.0V</text>
<path d="M25.4 579.30 H30.4" stroke="#8c8c8c" stroke-width="0.8"/>
<text x="8.2" y="582.2" font-family="'Liberation Sans', sans-serif" font-size="8" font-weight="bold" fill="#c6c6c6" textLength="16.6" lengthAdjust="spacingAndGlyphs">-0.4V</text>
<path d="M30.40 579.3 V583.5" stroke="#8c8c8c" stroke-width="0.8"/>
<text x="23.0" y="590.9" font-family="'Liberation Sans', sans-serif" font-size="8" font-weight="bold" fill="#c6c6c6" textLength="13.4" lengthAdjust="spacingAndGlyphs">0ms</text>
<path d="M133.90 579.3 V583.5" stroke="#8c8c8c" stroke-width="0.8"/>
<text x="126.6" y="590.9" font-family="'Liberation Sans', sans-serif" font-size="8" font-weight="bold" fill="#c6c6c6" textLength="13.4" lengthAdjust="spacingAndGlyphs">1ms</text>
<path d="M237.40 579.3 V583.5" stroke="#8c8c8c" stroke-width="0.8"/>
<text x="230.1" y="590.9" font-family="'Liberation Sans', sans-serif" font-size="8" font-weight="bold" fill="#c6c6c6" textLength="13.4" lengthAdjust="spacingAndGlyphs">2ms</text>
<path d="M340.90 579.3 V583.5" stroke="#8c8c8c" stroke-width="0.8"/>
<text x="333.6" y="590.9" font-family="'Liberation Sans', sans-serif" font-size="8" font-weight="bold" fill="#c6c6c6" textLength="13.4" lengthAdjust="spacingAndGlyphs">3ms</text>
<path d="M444.40 579.3 V583.5" stroke="#8c8c8c" stroke-width="0.8"/>
<text x="437.1" y="590.9" font-family="'Liberation Sans', sans-serif" font-size="8" font-weight="bold" fill="#c6c6c6" textLength="13.4" lengthAdjust="spacingAndGlyphs">4ms</text>
<path d="M547.90 579.3 V583.5" stroke="#8c8c8c" stroke-width="0.8"/>
<text x="540.6" y="590.9" font-family="'Liberation Sans', sans-serif" font-size="8" font-weight="bold" fill="#c6c6c6" textLength="13.4" lengthAdjust="spacingAndGlyphs">5ms</text>
<path d="M651.40 579.3 V583.5" stroke="#8c8c8c" stroke-width="0.8"/>
<text x="644.1" y="590.9" font-family="'Liberation Sans', sans-serif" font-size="8" font-weight="bold" fill="#c6c6c6" textLength="13.4" lengthAdjust="spacingAndGlyphs">6ms</text>
<path d="M754.90 579.3 V583.5" stroke="#8c8c8c" stroke-width="0.8"/>
<text x="747.6" y="590.9" font-family="'Liberation Sans', sans-serif" font-size="8" font-weight="bold" fill="#c6c6c6" textLength="13.4" lengthAdjust="spacingAndGlyphs">7ms</text>
<path d="M858.40 579.3 V583.5" stroke="#8c8c8c" stroke-width="0.8"/>
<text x="851.1" y="590.9" font-family="'Liberation Sans', sans-serif" font-size="8" font-weight="bold" fill="#c6c6c6" textLength="13.4" lengthAdjust="spacingAndGlyphs">8ms</text>
<path d="M961.90 579.3 V583.5" stroke="#8c8c8c" stroke-width="0.8"/>
<text x="954.6" y="590.9" font-family="'Liberation Sans', sans-serif" font-size="8" font-weight="bold" fill="#c6c6c6" textLength="13.4" lengthAdjust="spacingAndGlyphs">9ms</text>
<path d="M1065.40 579.3 V583.5" stroke="#8c8c8c" stroke-width="0.8"/>
<text x="1056.2" y="590.9" font-family="'Liberation Sans', sans-serif" font-size="8" font-weight="bold" fill="#c6c6c6" textLength="17.2" lengthAdjust="spacingAndGlyphs">10ms</text>
<path d="M31.0 375.05 H1065.0" stroke="#111180" stroke-width="1.5"/>
<text x="275.8" y="356.8" font-family="'Liberation Sans', sans-serif" font-size="7.4" font-weight="bold" fill="#22d822" textLength="25.6" lengthAdjust="spacingAndGlyphs">V(n005)</text>
<text x="793.2" y="356.8" font-family="'Liberation Sans', sans-serif" font-size="7.4" font-weight="bold" fill="#1a1ad8" textLength="25.6" lengthAdjust="spacingAndGlyphs">V(n001)</text>
<path d="M30.7 557.23 L31.4 557.27 L32.2 557.09 L32.9 556.73 L33.7 556.60 L34.4 556.55 L35.1 556.66 L35.9 556.45 L36.6 556.65 L37.4 556.56 L38.1 556.71 L38.8 556.65 L39.6 556.29 L40.3 556.36 L41.0 556.29 L41.8 556.52 L42.5 556.47 L43.3 556.22 L44.0 556.52 L44.7 556.34 L45.5 556.40 L46.2 556.57 L47.0 556.29 L47.7 556.42 L48.4 556.52 L49.2 556.64 L49.9 556.35 L50.7 556.21 L51.4 556.15 L52.1 556.51 L52.9 556.56 L53.6 556.47 L54.4 556.40 L55.1 556.53 L55.8 556.34 L56.6 556.13 L57.3 556.43 L58.0 556.52 L58.8 556.30 L59.5 556.12 L60.3 556.20 L61.0 556.15 L61.7 556.19 L62.5 556.32 L63.2 556.17 L64.0 556.41 L64.7 556.55 L65.4 556.28 L66.2 556.32 L66.9 556.63 L67.7 556.24 L68.4 556.27 L69.1 556.45 L69.9 556.16 L70.6 556.35 L71.3 556.65 L72.1 556.43 L72.8 556.51 L73.6 556.63 L74.3 556.63 L75.0 556.43 L75.8 556.33 L76.5 556.35 L77.3 556.46 L78.0 556.57 L78.7 556.44 L79.5 556.56 L80.2 556.67 L81.0 557.11 L81.7 557.08 L82.4 557.29 L83.2 557.68 L83.9 557.67 L84.7 557.69 L85.4 558.02 L86.1 558.31 L86.9 558.51 L87.6 558.46 L88.3 558.30 L89.1 558.31 L89.8 557.74 L90.6 558.02 L91.3 558.25 L92.0 558.44 L92.8 558.66 L93.5 558.73 L94.3 558.80 L95.0 558.87 L95.7 558.94 L96.5 558.95 L97.2 558.96 L98.0 558.96 L98.7 558.96 L99.4 558.96 L100.2 558.97 L100.9 558.97 L101.7 558.97 L102.4 558.97 L103.1 558.98 L103.9 558.98 L104.6 558.98 L105.3 558.98 L106.1 558.99 L106.8 558.99 L107.6 558.99 L108.3 558.99 L109.0 558.99 L109.8 558.99 L110.5 558.99 L111.3 558.98 L112.0 558.98 L112.7 558.98 L113.5 558.98 L114.2 558.98 L115.0 558.97 L115.7 558.97 L116.4 558.97 L117.2 558.97 L117.9 558.96 L118.6 558.96 L119.4 558.96 L120.1 558.96 L120.9 558.95 L121.6 558.95 L122.3 558.88 L123.1 558.80 L123.8 558.72 L124.6 558.59 L125.3 558.35 L126.0 558.12 L126.8 558.05 L127.5 557.87 L128.3 558.03 L129.0 558.41 L129.7 558.23 L130.5 557.94 L131.2 557.99 L132.0 557.85 L132.7 557.71 L133.4 557.30 L134.2 557.24 L134.9 556.96 L135.6 556.95 L136.4 557.18 L137.1 557.05 L137.9 556.99 L138.6 556.56 L139.3 556.49 L140.1 556.64 L140.8 556.69 L141.6 556.55 L142.3 556.26 L143.0 556.67 L143.8 556.58 L144.5 556.29 L145.3 556.36 L146.0 556.68 L146.7 556.39 L147.5 556.55 L148.2 556.24 L149.0 556.63 L149.7 556.24 L150.4 556.65 L151.2 556.33 L151.9 556.22 L152.6 556.63 L153.4 556.41 L154.1 556.35 L154.9 556.55 L155.6 556.25 L156.3 556.24 L157.1 556.25 L157.8 556.18 L158.6 556.28 L159.3 556.39 L160.0 556.31 L160.8 556.35 L161.5 556.37 L162.3 556.33 L163.0 556.11 L163.7 556.20 L164.5 556.48 L165.2 556.29 L166.0 556.40 L166.7 556.18 L167.4 556.26 L168.2 556.52 L168.9 556.42 L169.6 556.60 L170.4 556.45 L171.1 556.41 L171.9 556.38 L172.6 556.40 L173.3 556.51 L174.1 556.64 L174.8 556.45 L175.6 556.59 L176.3 556.24 L177.0 556.22 L177.8 556.23 L178.5 556.62 L179.3 556.35 L180.0 556.65 L180.7 556.80 L181.5 556.51 L182.2 556.64 L182.9 557.00 L183.7 556.74 L184.4 557.06 L185.2 557.05 L185.9 557.47 L186.6 557.53 L187.4 557.45 L188.1 557.96 L188.9 557.88 L189.6 558.31 L190.3 558.51 L191.1 558.46 L191.8 558.30 L192.6 558.29 L193.3 557.78 L194.0 557.78 L194.8 558.11 L195.5 558.44 L196.3 558.66 L197.0 558.73 L197.7 558.80 L198.5 558.87 L199.2 558.94 L199.9 558.95 L200.7 558.96 L201.4 558.96 L202.2 558.96 L202.9 558.96 L203.6 558.97 L204.4 558.97 L205.1 558.97 L205.9 558.97 L206.6 558.98 L207.3 558.98 L208.1 558.98 L208.8 558.98 L209.6 558.99 L210.3 558.99 L211.0 558.99 L211.8 558.99 L212.5 558.99 L213.3 558.99 L214.0 558.99 L214.7 558.98 L215.5 558.98 L216.2 558.98 L216.9 558.98 L217.7 558.98 L218.4 558.97 L219.2 558.97 L219.9 558.97 L220.6 558.97 L221.4 558.96 L222.1 558.96 L222.9 558.96 L223.6 558.96 L224.3 558.95 L225.1 558.95 L225.8 558.88 L226.6 558.80 L227.3 558.72 L228.0 558.59 L228.8 558.35 L229.5 558.07 L230.2 558.03 L231.0 557.81 L231.7 558.23 L232.5 558.41 L233.2 558.01 L233.9 558.12 L234.7 557.62 L235.4 557.74 L236.2 557.35 L236.9 557.22 L237.6 557.29 L238.4 557.22 L239.1 556.96 L239.9 556.97 L240.6 556.64 L241.3 556.54 L242.1 556.61 L242.8 556.77 L243.6 556.58 L244.3 556.45 L245.0 556.35 L245.8 556.58 L246.5 556.31 L247.2 556.68 L248.0 556.61 L248.7 556.45 L249.5 556.39 L250.2 556.53 L250.9 556.35 L251.7 556.53 L252.4 556.38 L253.2 556.20 L253.9 556.20 L254.6 556.29 L255.4 556.20 L256.1 556.58 L256.9 556.28 L257.6 556.28 L258.3 556.21 L259.1 556.26 L259.8 556.61 L260.6 556.24 L261.3 556.27 L262.0 556.11 L262.8 556.34 L263.5 556.20 L264.2 556.10 L265.0 556.15 L265.7 556.13 L266.5 556.26 L267.2 556.41 L267.9 556.49 L268.7 556.48 L269.4 556.32 L270.2 556.62 L270.9 556.50 L271.6 556.16 L272.4 556.59 L273.1 556.51 L273.9 556.22 L274.6 556.40 L275.3 556.56 L276.1 556.45 L276.8 556.50 L277.5 556.28 L278.3 556.24 L279.0 556.22 L279.8 556.45 L280.5 556.49 L281.2 556.44 L282.0 556.63 L282.7 556.53 L283.5 556.65 L284.2 556.73 L284.9 556.44 L285.7 556.81 L286.4 556.88 L287.2 556.90 L287.9 557.05 L288.6 557.34 L289.4 557.43 L290.1 557.33 L290.9 557.81 L291.6 557.93 L292.3 557.88 L293.1 558.31 L293.8 558.51 L294.5 558.46 L295.3 558.30 L296.0 558.23 L296.8 558.07 L297.5 558.02 L298.2 558.21 L299.0 558.44 L299.7 558.66 L300.5 558.73 L301.2 558.80 L301.9 558.87 L302.7 558.94 L303.4 558.95 L304.2 558.96 L304.9 558.96 L305.6 558.96 L306.4 558.96 L307.1 558.97 L307.9 558.97 L308.6 558.97 L309.3 558.97 L310.1 558.98 L310.8 558.98 L311.5 558.98 L312.3 558.98 L313.0 558.99 L313.8 558.99 L314.5 558.99 L315.2 558.99 L316.0 558.99 L316.7 558.99 L317.5 558.99 L318.2 558.98 L318.9 558.98 L319.7 558.98 L320.4 558.98 L321.2 558.98 L321.9 558.97 L322.6 558.97 L323.4 558.97 L324.1 558.97 L324.9 558.96 L325.6 558.96 L326.3 558.96 L327.1 558.96 L327.8 558.95 L328.5 558.95 L329.3 558.88 L330.0 558.80 L330.8 558.72 L331.5 558.59 L332.2 558.35 L333.0 558.30 L333.7 558.11 L334.5 557.74 L335.2 558.36 L335.9 558.41 L336.7 558.19 L337.4 557.88 L338.2 557.69 L338.9 557.49 L339.6 557.78 L340.4 557.59 L341.1 557.51 L341.8 557.06 L342.6 557.07 L343.3 556.71 L344.1 556.81 L344.8 556.58 L345.5 556.61 L346.3 556.39 L347.0 556.75 L347.8 556.74 L348.5 556.67 L349.2 556.40 L350.0 556.71 L350.7 556.39 L351.5 556.34 L352.2 556.25 L352.9 556.34 L353.7 556.31 L354.4 556.44 L355.2 556.36 L355.9 556.62 L356.6 556.48 L357.4 556.63 L358.1 556.52 L358.8 556.52 L359.6 556.52 L360.3 556.29 L361.1 556.60 L361.8 556.37 L362.5 556.28 L363.3 556.61 L364.0 556.45 L364.8 556.39 L365.5 556.19 L366.2 556.21 L367.0 556.35 L367.7 556.55 L368.5 556.33 L369.2 556.20 L369.9 556.28 L370.7 556.24 L371.4 556.40 L372.2 556.50 L372.9 556.33 L373.6 556.32 L374.4 556.16 L375.1 556.62 L375.8 556.39 L376.6 556.58 L377.3 556.28 L378.1 556.35 L378.8 556.63 L379.5 556.59 L380.3 556.18 L381.0 556.61 L381.8 556.46 L382.5 556.37 L383.2 556.59 L384.0 556.67 L384.7 556.24 L385.5 556.49 L386.2 556.75 L386.9 556.64 L387.7 556.59 L388.4 556.42 L389.1 556.56 L389.9 556.83 L390.6 556.72 L391.4 557.12 L392.1 557.01 L392.8 557.37 L393.6 557.45 L394.3 557.74 L395.1 557.80 L395.8 558.33 L396.5 558.31 L397.3 558.51 L398.0 558.46 L398.8 558.30 L399.5 558.33 L400.2 557.85 L401.0 558.24 L401.7 558.13 L402.5 558.44 L403.2 558.66 L403.9 558.73 L404.7 558.80 L405.4 558.87 L406.1 558.94 L406.9 558.95 L407.6 558.96 L408.4 558.96 L409.1 558.96 L409.8 558.96 L410.6 558.97 L411.3 558.97 L412.1 558.97 L412.8 558.97 L413.5 558.98 L414.3 558.98 L415.0 558.98 L415.8 558.98 L416.5 558.99 L417.2 558.99 L418.0 558.99 L418.7 558.99 L419.5 558.99 L420.2 558.99 L420.9 558.99 L421.7 558.98 L422.4 558.98 L423.1 558.98 L423.9 558.98 L424.6 558.98 L425.4 558.97 L426.1 558.97 L426.8 558.97 L427.6 558.97 L428.3 558.96 L429.1 558.96 L429.8 558.96 L430.5 558.96 L431.3 558.95 L432.0 558.95 L432.8 558.88 L433.5 558.80 L434.2 558.72 L435.0 558.59 L435.7 558.35 L436.5 558.11 L437.2 557.83 L437.9 558.07 L438.7 558.06 L439.4 558.41 L440.1 558.13 L440.9 558.11 L441.6 557.98 L442.4 557.68 L443.1 557.79 L443.8 557.59 L444.6 557.17 L445.3 557.09 L446.1 557.07 L446.8 556.82 L447.5 556.92 L448.3 556.59 L449.0 556.56 L449.8 556.46 L450.5 556.36 L451.2 556.72 L452.0 556.59 L452.7 556.68 L453.4 556.31 L454.2 556.58 L454.9 556.54 L455.7 556.38 L456.4 556.28 L457.1 556.33 L457.9 556.66 L458.6 556.66 L459.4 556.35 L460.1 556.58 L460.8 556.19 L461.6 556.34 L462.3 556.25 L463.1 556.60 L463.8 556.35 L464.5 556.52 L465.3 556.15 L466.0 556.59 L466.8 556.50 L467.5 556.29 L468.2 556.59 L469.0 556.24 L469.7 556.26 L470.4 556.10 L471.2 556.56 L471.9 556.58 L472.7 556.23 L473.4 556.59 L474.1 556.31 L474.9 556.33 L475.6 556.59 L476.4 556.53 L477.1 556.54 L477.8 556.44 L478.6 556.30 L479.3 556.53 L480.1 556.24 L480.8 556.27 L481.5 556.17 L482.3 556.32 L483.0 556.60 L483.8 556.29 L484.5 556.21 L485.2 556.52 L486.0 556.29 L486.7 556.49 L487.4 556.55 L488.2 556.52 L488.9 556.65 L489.7 556.56 L490.4 556.69 L491.1 556.48 L491.9 556.48 L492.6 556.73 L493.4 556.70 L494.1 556.91 L494.8 557.21 L495.6 557.45 L496.3 557.34 L497.1 557.68 L497.8 557.46 L498.5 557.70 L499.3 558.34 L500.0 558.31 L500.7 558.51 L501.5 558.46 L502.2 558.30 L503.0 558.36 L503.7 558.17 L504.4 557.89 L505.2 558.45 L505.9 558.44 L506.7 558.66 L507.4 558.73 L508.1 558.80 L508.9 558.87 L509.6 558.94 L510.4 558.95 L511.1 558.96 L511.8 558.96 L512.6 558.96 L513.3 558.96 L514.1 558.97 L514.8 558.97 L515.5 558.97 L516.3 558.97 L517.0 558.98 L517.7 558.98 L518.5 558.98 L519.2 558.98 L520.0 558.99 L520.7 558.99 L521.4 558.99 L522.2 558.99 L522.9 558.99 L523.7 558.99 L524.4 558.99 L525.1 558.98 L525.9 558.98 L526.6 558.98 L527.4 558.98 L528.1 558.98 L528.8 558.97 L529.6 558.97 L530.3 558.97 L531.1 558.97 L531.8 558.96 L532.5 558.96 L533.3 558.96 L534.0 558.96 L534.7 558.95 L535.5 558.95 L536.2 558.88 L537.0 558.80 L537.7 558.72 L538.4 558.59 L539.2 558.35 L539.9 558.15 L540.7 557.72 L541.4 557.81 L542.1 558.07 L542.9 558.41 L543.6 558.29 L544.4 557.78 L545.1 557.92 L545.8 557.58 L546.6 557.70 L547.3 557.22 L548.1 557.26 L548.8 557.26 L549.5 556.91 L550.3 556.91 L551.0 556.74 L551.7 556.67 L552.5 556.63 L553.2 556.82 L554.0 556.51 L554.7 556.64 L555.4 556.23 L556.2 556.43 L556.9 556.42 L557.7 556.44 L558.4 556.21 L559.1 556.52 L559.9 556.24 L560.6 556.37 L561.4 556.26 L562.1 556.44 L562.8 556.23 L563.6 556.57 L564.3 556.26 L565.0 556.63 L565.8 556.39 L566.5 556.61 L567.3 556.60 L568.0 556.55 L568.7 556.53 L569.5 556.33 L570.2 556.54 L571.0 556.23 L571.7 556.37 L572.4 556.17 L573.2 556.47 L573.9 556.12 L574.7 556.48 L575.4 556.52 L576.1 556.41 L576.9 556.43 L577.6 556.33 L578.4 556.33 L579.1 556.35 L579.8 556.14 L580.6 556.37 L581.3 556.52 L582.0 556.37 L582.8 556.38 L583.5 556.21 L584.3 556.19 L585.0 556.41 L585.7 556.47 L586.5 556.52 L587.2 556.42 L588.0 556.42 L588.7 556.64 L589.4 556.60 L590.2 556.54 L590.9 556.28 L591.7 556.44 L592.4 556.69 L593.1 556.67 L593.9 556.35 L594.6 556.74 L595.4 556.85 L596.1 556.85 L596.8 556.76 L597.6 556.76 L598.3 557.06 L599.0 556.97 L599.8 557.19 L600.5 557.60 L601.3 557.52 L602.0 557.70 L602.7 558.17 L603.5 558.31 L604.2 558.51 L605.0 558.46 L605.7 558.30 L606.4 558.33 L607.2 558.02 L607.9 557.81 L608.7 558.29 L609.4 558.44 L610.1 558.66 L610.9 558.73 L611.6 558.80 L612.3 558.87 L613.1 558.94 L613.8 558.95 L614.6 558.96 L615.3 558.96 L616.0 558.96 L616.8 558.96 L617.5 558.97 L618.3 558.97 L619.0 558.97 L619.7 558.97 L620.5 558.98 L621.2 558.98 L622.0 558.98 L622.7 558.98 L623.4 558.99 L624.2 558.99 L624.9 558.99 L625.7 558.99 L626.4 558.99 L627.1 558.99 L627.9 558.99 L628.6 558.98 L629.3 558.98 L630.1 558.98 L630.8 558.98 L631.6 558.98 L632.3 558.97 L633.0 558.97 L633.8 558.97 L634.5 558.97 L635.3 558.96 L636.0 558.96 L636.7 558.96 L637.5 558.96 L638.2 558.95 L639.0 558.95 L639.7 558.88 L640.4 558.80 L641.2 558.72 L641.9 558.59 L642.7 558.35 L643.4 558.25 L644.1 558.11 L644.9 557.92 L645.6 558.17 L646.3 558.41 L647.1 558.34 L647.8 558.18 L648.6 557.90 L649.3 557.72 L650.0 557.46 L650.8 557.20 L651.5 557.37 L652.3 557.20 L653.0 556.89 L653.7 557.03 L654.5 556.59 L655.2 556.57 L656.0 556.56 L656.7 556.69 L657.4 556.64 L658.2 556.34 L658.9 556.34 L659.6 556.27 L660.4 556.65 L661.1 556.41 L661.9 556.21 L662.6 556.48 L663.3 556.52 L664.1 556.66 L664.8 556.31 L665.6 556.20 L666.3 556.38 L667.0 556.20 L667.8 556.17 L668.5 556.63 L669.3 556.25 L670.0 556.40 L670.7 556.55 L671.5 556.29 L672.2 556.16 L673.0 556.52 L673.7 556.13 L674.4 556.49 L675.2 556.48 L675.9 556.22 L676.6 556.22 L677.4 556.27 L678.1 556.45 L678.9 556.46 L679.6 556.39 L680.3 556.51 L681.1 556.25 L681.8 556.60 L682.6 556.56 L683.3 556.26 L684.0 556.50 L684.8 556.51 L685.5 556.58 L686.3 556.26 L687.0 556.46 L687.7 556.48 L688.5 556.39 L689.2 556.50 L690.0 556.38 L690.7 556.45 L691.4 556.27 L692.2 556.21 L692.9 556.24 L693.6 556.23 L694.4 556.35 L695.1 556.20 L695.9 556.58 L696.6 556.62 L697.3 556.35 L698.1 556.54 L698.8 556.81 L699.6 556.48 L700.3 556.96 L701.0 556.71 L701.8 556.86 L702.5 557.38 L703.3 557.42 L704.0 557.57 L704.7 557.49 L705.5 558.02 L706.2 558.01 L707.0 558.31 L707.7 558.51 L708.4 558.46 L709.2 558.30 L709.9 557.90 L710.6 557.87 L711.4 557.94 L712.1 558.46 L712.9 558.44 L713.6 558.66 L714.3 558.73 L715.1 558.80 L715.8 558.87 L716.6 558.94 L717.3 558.95 L718.0 558.96 L718.8 558.96 L719.5 558.96 L720.3 558.96 L721.0 558.97 L721.7 558.97 L722.5 558.97 L723.2 558.97 L723.9 558.98 L724.7 558.98 L725.4 558.98 L726.2 558.98 L726.9 558.99 L727.6 558.99 L728.4 558.99 L729.1 558.99 L729.9 558.99 L730.6 558.99 L731.3 558.99 L732.1 558.98 L732.8 558.98 L733.6 558.98 L734.3 558.98 L735.0 558.98 L735.8 558.97 L736.5 558.97 L737.3 558.97 L738.0 558.97 L738.7 558.96 L739.5 558.96 L740.2 558.96 L740.9 558.96 L741.7 558.95 L742.4 558.95 L743.2 558.88 L743.9 558.80 L744.6 558.72 L745.4 558.59 L746.1 558.35 L746.9 558.28 L747.6 557.63 L748.3 557.95 L749.1 558.12 L749.8 558.41 L750.6 558.23 L751.3 558.20 L752.0 557.99 L752.8 557.42 L753.5 557.69 L754.3 557.19 L755.0 557.31 L755.7 557.04 L756.5 557.00 L757.2 556.83 L757.9 556.73 L758.7 556.86 L759.4 556.51 L760.2 556.43 L760.9 556.68 L761.6 556.59 L762.4 556.42 L763.1 556.66 L763.9 556.66 L764.6 556.31 L765.3 556.65 L766.1 556.39 L766.8 556.31 L767.6 556.45 L768.3 556.56 L769.0 556.35 L769.8 556.25 L770.5 556.50 L771.2 556.25 L772.0 556.54 L772.7 556.22 L773.5 556.59 L774.2 556.24 L774.9 556.49 L775.7 556.21 L776.4 556.25 L777.2 556.38 L777.9 556.28 L778.6 556.60 L779.4 556.16 L780.1 556.15 L780.9 556.59 L781.6 556.47 L782.3 556.20 L783.1 556.16 L783.8 556.31 L784.6 556.32 L785.3 556.47 L786.0 556.44 L786.8 556.20 L787.5 556.33 L788.2 556.59 L789.0 556.42 L789.7 556.35 L790.5 556.50 L791.2 556.53 L791.9 556.58 L792.7 556.48 L793.4 556.31 L794.2 556.21 L794.9 556.56 L795.6 556.48 L796.4 556.38 L797.1 556.49 L797.9 556.52 L798.6 556.28 L799.3 556.62 L800.1 556.52 L800.8 556.34 L801.6 556.44 L802.3 556.87 L803.0 556.49 L803.8 556.78 L804.5 556.91 L805.2 557.22 L806.0 557.16 L806.7 557.21 L807.5 557.45 L808.2 557.50 L808.9 557.82 L809.7 557.99 L810.4 558.31 L811.2 558.51 L811.9 558.46 L812.6 558.30 L813.4 557.90 L814.1 557.94 L814.9 557.94 L815.6 558.09 L816.3 558.44 L817.1 558.66 L817.8 558.73 L818.6 558.80 L819.3 558.87 L820.0 558.94 L820.8 558.95 L821.5 558.96 L822.2 558.96 L823.0 558.96 L823.7 558.96 L824.5 558.97 L825.2 558.97 L825.9 558.97 L826.7 558.97 L827.4 558.98 L828.2 558.98 L828.9 558.98 L829.6 558.98 L830.4 558.99 L831.1 558.99 L831.9 558.99 L832.6 558.99 L833.3 558.99 L834.1 558.99 L834.8 558.99 L835.5 558.98 L836.3 558.98 L837.0 558.98 L837.8 558.98 L838.5 558.98 L839.2 558.97 L840.0 558.97 L840.7 558.97 L841.5 558.97 L842.2 558.96 L842.9 558.96 L843.7 558.96 L844.4 558.96 L845.2 558.95 L845.9 558.95 L846.6 558.88 L847.4 558.80 L848.1 558.72 L848.9 558.59 L849.6 558.35 L850.3 558.33 L851.1 557.73 L851.8 557.93 L852.5 558.01 L853.3 558.41 L854.0 558.37 L854.8 558.01 L855.5 557.69 L856.2 557.60 L857.0 557.71 L857.7 557.42 L858.5 557.34 L859.2 557.36 L859.9 557.25 L860.7 556.89 L861.4 556.80 L862.2 556.51 L862.9 556.59 L863.6 556.54 L864.4 556.55 L865.1 556.60 L865.9 556.69 L866.6 556.25 L867.3 556.67 L868.1 556.28 L868.8 556.52 L869.5 556.20 L870.3 556.52 L871.0 556.24 L871.8 556.30 L872.5 556.35 L873.2 556.63 L874.0 556.25 L874.7 556.47 L875.5 556.49 L876.2 556.55 L876.9 556.25 L877.7 556.41 L878.4 556.36 L879.2 556.41 L879.9 556.25 L880.6 556.37 L881.4 556.35 L882.1 556.36 L882.8 556.38 L883.6 556.11 L884.3 556.33 L885.1 556.43 L885.8 556.29 L886.5 556.59 L887.3 556.43 L888.0 556.13 L888.8 556.46 L889.5 556.29 L890.2 556.38 L891.0 556.58 L891.7 556.49 L892.5 556.31 L893.2 556.32 L893.9 556.41 L894.7 556.25 L895.4 556.36 L896.2 556.57 L896.9 556.57 L897.6 556.41 L898.4 556.42 L899.1 556.50 L899.8 556.34 L900.6 556.33 L901.3 556.50 L902.1 556.21 L902.8 556.68 L903.5 556.30 L904.3 556.32 L905.0 556.82 L905.8 556.73 L906.5 556.90 L907.2 556.81 L908.0 557.00 L908.7 557.15 L909.5 557.29 L910.2 557.49 L910.9 557.35 L911.7 557.83 L912.4 557.97 L913.2 558.26 L913.9 558.31 L914.6 558.51 L915.4 558.46 L916.1 558.30 L916.8 558.17 L917.6 557.88 L918.3 557.92 L919.1 558.30 L919.8 558.44 L920.5 558.66 L921.3 558.73 L922.0 558.80 L922.8 558.87 L923.5 558.94 L924.2 558.95 L925.0 558.96 L925.7 558.96 L926.5 558.96 L927.2 558.96 L927.9 558.97 L928.7 558.97 L929.4 558.97 L930.1 558.97 L930.9 558.98 L931.6 558.98 L932.4 558.98 L933.1 558.98 L933.8 558.99 L934.6 558.99 L935.3 558.99 L936.1 558.99 L936.8 558.99 L937.5 558.99 L938.3 558.99 L939.0 558.98 L939.8 558.98 L940.5 558.98 L941.2 558.98 L942.0 558.98 L942.7 558.97 L943.5 558.97 L944.2 558.97 L944.9 558.97 L945.7 558.96 L946.4 558.96 L947.1 558.96 L947.9 558.96 L948.6 558.95 L949.4 558.95 L950.1 558.88 L950.8 558.80 L951.6 558.72 L952.3 558.59 L953.1 558.35 L953.8 557.88 L954.5 557.64 L955.3 558.14 L956.0 558.41 L956.8 558.41 L957.5 557.97 L958.2 558.07 L959.0 558.07 L959.7 557.63 L960.5 557.63 L961.2 557.26 L961.9 557.07 L962.7 557.00 L963.4 556.87 L964.1 556.77 L964.9 556.94 L965.6 556.88 L966.4 556.48 L967.1 556.75 L967.8 556.70 L968.6 556.59 L969.3 556.45 L970.1 556.35 L970.8 556.57 L971.5 556.22 L972.3 556.61 L973.0 556.35 L973.8 556.28 L974.5 556.43 L975.2 556.37 L976.0 556.40 L976.7 556.25 L977.5 556.35 L978.2 556.48 L978.9 556.35 L979.7 556.63 L980.4 556.43 L981.1 556.17 L981.9 556.49 L982.6 556.30 L983.4 556.62 L984.1 556.42 L984.8 556.33 L985.6 556.30 L986.3 556.41 L987.1 556.51 L987.8 556.10 L988.5 556.31 L989.3 556.51 L990.0 556.13 L990.8 556.52 L991.5 556.40 L992.2 556.54 L993.0 556.47 L993.7 556.30 L994.4 556.41 L995.2 556.23 L995.9 556.60 L996.7 556.44 L997.4 556.38 L998.1 556.27 L998.9 556.55 L999.6 556.20 L1000.4 556.54 L1001.1 556.45 L1001.8 556.61 L1002.6 556.41 L1003.3 556.27 L1004.1 556.27 L1004.8 556.36 L1005.5 556.39 L1006.3 556.31 L1007.0 556.77 L1007.8 556.37 L1008.5 556.75 L1009.2 556.70 L1010.0 556.70 L1010.7 556.52 L1011.4 557.09 L1012.2 557.09 L1012.9 557.35 L1013.7 557.58 L1014.4 557.67 L1015.1 557.57 L1015.9 557.75 L1016.6 557.89 L1017.4 558.31 L1018.1 558.51 L1018.8 558.46 L1019.6 558.30 L1020.3 558.17 L1021.1 557.96 L1021.8 558.21 L1022.5 558.28 L1023.3 558.44 L1024.0 558.66 L1024.8 558.73 L1025.5 558.80 L1026.2 558.87 L1027.0 558.94 L1027.7 558.95 L1028.4 558.96 L1029.2 558.96 L1029.9 558.96 L1030.7 558.96 L1031.4 558.97 L1032.1 558.97 L1032.9 558.97 L1033.6 558.97 L1034.4 558.98 L1035.1 558.98 L1035.8 558.98 L1036.6 558.98 L1037.3 558.99 L1038.1 558.99 L1038.8 558.99 L1039.5 558.99 L1040.3 558.99 L1041.0 558.99 L1041.7 558.99 L1042.5 558.98 L1043.2 558.98 L1044.0 558.98 L1044.7 558.98 L1045.4 558.98 L1046.2 558.97 L1046.9 558.97 L1047.7 558.97 L1048.4 558.97 L1049.1 558.96 L1049.9 558.96 L1050.6 558.96 L1051.4 558.96 L1052.1 558.95 L1052.8 558.95 L1053.6 558.88 L1054.3 558.80 L1055.1 558.72 L1055.8 558.59 L1056.5 558.35 L1057.3 557.92 L1058.0 557.74 L1058.7 558.06 L1059.5 558.28 L1060.2 558.41 L1061.0 558.19 L1061.7 558.25 L1062.4 557.69 L1063.2 557.55 L1063.9 557.76 L1064.7 557.60 L1065.4 557.46 L1065.4 562.33 L1064.7 561.75 L1063.9 562.23 L1063.2 561.72 L1062.4 561.35 L1061.7 561.82 L1061.0 561.05 L1060.2 561.09 L1059.5 561.23 L1058.7 561.83 L1058.0 561.68 L1057.3 561.72 L1056.5 561.15 L1055.8 560.91 L1055.1 560.78 L1054.3 560.70 L1053.6 560.62 L1052.8 560.55 L1052.1 560.55 L1051.4 560.54 L1050.6 560.54 L1049.9 560.54 L1049.1 560.54 L1048.4 560.53 L1047.7 560.53 L1046.9 560.53 L1046.2 560.53 L1045.4 560.52 L1044.7 560.52 L1044.0 560.52 L1043.2 560.52 L1042.5 560.52 L1041.7 560.51 L1041.0 560.51 L1040.3 560.51 L1039.5 560.51 L1038.8 560.51 L1038.1 560.51 L1037.3 560.51 L1036.6 560.52 L1035.8 560.52 L1035.1 560.52 L1034.4 560.52 L1033.6 560.53 L1032.9 560.53 L1032.1 560.53 L1031.4 560.53 L1030.7 560.54 L1029.9 560.54 L1029.2 560.54 L1028.4 560.54 L1027.7 560.55 L1027.0 560.56 L1026.2 560.63 L1025.5 560.70 L1024.8 560.77 L1024.0 560.84 L1023.3 561.06 L1022.5 561.20 L1021.8 561.18 L1021.1 561.83 L1020.3 561.62 L1019.6 561.20 L1018.8 561.04 L1018.1 560.99 L1017.4 561.19 L1016.6 561.08 L1015.9 561.38 L1015.1 561.49 L1014.4 562.32 L1013.7 562.33 L1012.9 562.24 L1012.2 562.28 L1011.4 562.58 L1010.7 563.09 L1010.0 562.47 L1009.2 562.74 L1008.5 562.65 L1007.8 563.03 L1007.0 562.89 L1006.3 562.70 L1005.5 563.07 L1004.8 563.12 L1004.1 563.22 L1003.3 562.86 L1002.6 563.14 L1001.8 563.10 L1001.1 563.37 L1000.4 562.91 L999.6 563.31 L998.9 563.07 L998.1 563.28 L997.4 562.90 L996.7 563.23 L995.9 562.93 L995.2 563.29 L994.4 563.33 L993.7 562.83 L993.0 563.42 L992.2 563.35 L991.5 562.98 L990.8 563.39 L990.0 563.37 L989.3 563.42 L988.5 563.21 L987.8 562.99 L987.1 563.00 L986.3 563.42 L985.6 563.27 L984.8 563.40 L984.1 562.99 L983.4 563.35 L982.6 563.19 L981.9 563.34 L981.1 563.44 L980.4 562.96 L979.7 563.30 L978.9 563.29 L978.2 563.03 L977.5 563.18 L976.7 563.29 L976.0 563.20 L975.2 563.12 L974.5 562.75 L973.8 563.31 L973.0 563.21 L972.3 562.75 L971.5 563.15 L970.8 562.69 L970.1 563.36 L969.3 563.33 L968.6 563.12 L967.8 562.63 L967.1 563.11 L966.4 562.99 L965.6 562.52 L964.9 562.49 L964.1 562.21 L963.4 562.68 L962.7 562.63 L961.9 562.31 L961.2 561.73 L960.5 561.74 L959.7 561.55 L959.0 561.65 L958.2 561.78 L957.5 561.21 L956.8 561.09 L956.0 561.27 L955.3 561.57 L954.5 561.37 L953.8 561.44 L953.1 561.15 L952.3 560.91 L951.6 560.78 L950.8 560.70 L950.1 560.62 L949.4 560.55 L948.6 560.55 L947.9 560.54 L947.1 560.54 L946.4 560.54 L945.7 560.54 L944.9 560.53 L944.2 560.53 L943.5 560.53 L942.7 560.53 L942.0 560.52 L941.2 560.52 L940.5 560.52 L939.8 560.52 L939.0 560.52 L938.3 560.51 L937.5 560.51 L936.8 560.51 L936.1 560.51 L935.3 560.51 L934.6 560.51 L933.8 560.51 L933.1 560.52 L932.4 560.52 L931.6 560.52 L930.9 560.52 L930.1 560.53 L929.4 560.53 L928.7 560.53 L927.9 560.53 L927.2 560.54 L926.5 560.54 L925.7 560.54 L925.0 560.54 L924.2 560.55 L923.5 560.56 L922.8 560.63 L922.0 560.70 L921.3 560.77 L920.5 560.84 L919.8 561.06 L919.1 561.58 L918.3 561.44 L917.6 561.46 L916.8 561.19 L916.1 561.20 L915.4 561.04 L914.6 560.99 L913.9 561.19 L913.2 561.60 L912.4 561.51 L911.7 562.10 L910.9 561.67 L910.2 561.86 L909.5 562.26 L908.7 562.24 L908.0 562.66 L907.2 562.83 L906.5 562.89 L905.8 563.05 L905.0 562.97 L904.3 562.72 L903.5 562.84 L902.8 563.05 L902.1 563.22 L901.3 563.27 L900.6 563.13 L899.8 562.95 L899.1 563.29 L898.4 563.42 L897.6 562.93 L896.9 563.02 L896.2 562.95 L895.4 563.14 L894.7 563.06 L893.9 563.30 L893.2 563.09 L892.5 563.37 L891.7 563.20 L891.0 562.79 L890.2 563.11 L889.5 563.46 L888.8 563.43 L888.0 563.21 L887.3 563.23 L886.5 562.84 L885.8 563.09 L885.1 563.39 L884.3 563.20 L883.6 563.39 L882.8 563.40 L882.1 563.14 L881.4 562.88 L880.6 562.82 L879.9 562.87 L879.2 562.95 L878.4 563.38 L877.7 563.28 L876.9 563.24 L876.2 563.33 L875.5 563.37 L874.7 563.28 L874.0 563.36 L873.2 563.28 L872.5 562.83 L871.8 563.26 L871.0 562.81 L870.3 562.88 L869.5 563.37 L868.8 562.71 L868.1 563.27 L867.3 563.24 L866.6 563.26 L865.9 563.28 L865.1 562.88 L864.4 563.01 L863.6 562.84 L862.9 562.62 L862.2 562.89 L861.4 562.45 L860.7 562.37 L859.9 562.26 L859.2 562.20 L858.5 561.92 L857.7 561.92 L857.0 562.17 L856.2 561.92 L855.5 561.99 L854.8 561.52 L854.0 561.38 L853.3 561.09 L852.5 561.50 L851.8 561.31 L851.1 561.85 L850.3 561.41 L849.6 561.15 L848.9 560.91 L848.1 560.78 L847.4 560.70 L846.6 560.62 L845.9 560.55 L845.2 560.55 L844.4 560.54 L843.7 560.54 L842.9 560.54 L842.2 560.54 L841.5 560.53 L840.7 560.53 L840.0 560.53 L839.2 560.53 L838.5 560.52 L837.8 560.52 L837.0 560.52 L836.3 560.52 L835.5 560.52 L834.8 560.51 L834.1 560.51 L833.3 560.51 L832.6 560.51 L831.9 560.51 L831.1 560.51 L830.4 560.51 L829.6 560.52 L828.9 560.52 L828.2 560.52 L827.4 560.52 L826.7 560.53 L825.9 560.53 L825.2 560.53 L824.5 560.53 L823.7 560.54 L823.0 560.54 L822.2 560.54 L821.5 560.54 L820.8 560.55 L820.0 560.56 L819.3 560.63 L818.6 560.70 L817.8 560.77 L817.1 560.84 L816.3 561.06 L815.6 561.44 L814.9 561.33 L814.1 561.66 L813.4 561.30 L812.6 561.20 L811.9 561.04 L811.2 560.99 L810.4 561.19 L809.7 561.33 L808.9 561.29 L808.2 562.15 L807.5 562.18 L806.7 562.27 L806.0 562.61 L805.2 562.46 L804.5 562.69 L803.8 562.90 L803.0 562.86 L802.3 562.86 L801.6 563.09 L800.8 562.96 L800.1 563.31 L799.3 562.94 L798.6 563.17 L797.9 563.37 L797.1 563.01 L796.4 563.05 L795.6 562.91 L794.9 563.23 L794.2 563.03 L793.4 563.18 L792.7 563.06 L791.9 563.22 L791.2 563.24 L790.5 563.37 L789.7 562.92 L789.0 563.29 L788.2 563.07 L787.5 563.29 L786.8 563.20 L786.0 563.10 L785.3 563.13 L784.6 563.34 L783.8 562.81 L783.1 562.94 L782.3 563.24 L781.6 563.10 L780.9 563.36 L780.1 563.07 L779.4 563.47 L778.6 563.30 L777.9 562.91 L777.2 562.89 L776.4 563.00 L775.7 562.88 L774.9 563.35 L774.2 562.97 L773.5 562.92 L772.7 563.07 L772.0 563.15 L771.2 563.04 L770.5 563.25 L769.8 563.32 L769.0 562.95 L768.3 563.17 L767.6 563.24 L766.8 563.03 L766.1 563.32 L765.3 563.05 L764.6 562.88 L763.9 562.70 L763.1 562.74 L762.4 562.95 L761.6 562.88 L760.9 563.12 L760.2 563.06 L759.4 562.89 L758.7 562.74 L757.9 562.47 L757.2 562.86 L756.5 562.66 L755.7 562.30 L755.0 562.39 L754.3 562.06 L753.5 562.28 L752.8 561.62 L752.0 561.44 L751.3 561.19 L750.6 561.09 L749.8 561.09 L749.1 561.45 L748.3 561.71 L747.6 561.57 L746.9 561.48 L746.1 561.15 L745.4 560.91 L744.6 560.78 L743.9 560.70 L743.2 560.62 L742.4 560.55 L741.7 560.55 L740.9 560.54 L740.2 560.54 L739.5 560.54 L738.7 560.54 L738.0 560.53 L737.3 560.53 L736.5 560.53 L735.8 560.53 L735.0 560.52 L734.3 560.52 L733.6 560.52 L732.8 560.52 L732.1 560.52 L731.3 560.51 L730.6 560.51 L729.9 560.51 L729.1 560.51 L728.4 560.51 L727.6 560.51 L726.9 560.51 L726.2 560.52 L725.4 560.52 L724.7 560.52 L723.9 560.52 L723.2 560.53 L722.5 560.53 L721.7 560.53 L721.0 560.53 L720.3 560.54 L719.5 560.54 L718.8 560.54 L718.0 560.54 L717.3 560.55 L716.6 560.56 L715.8 560.63 L715.1 560.70 L714.3 560.77 L713.6 560.84 L712.9 561.06 L712.1 561.28 L711.4 561.36 L710.6 561.67 L709.9 561.19 L709.2 561.20 L708.4 561.04 L707.7 560.99 L707.0 561.19 L706.2 561.35 L705.5 561.40 L704.7 561.53 L704.0 561.85 L703.3 562.37 L702.5 562.51 L701.8 562.12 L701.0 562.39 L700.3 563.06 L699.6 563.07 L698.8 563.12 L698.1 563.11 L697.3 563.00 L696.6 563.14 L695.9 563.11 L695.1 562.74 L694.4 562.82 L693.6 563.37 L692.9 562.75 L692.2 563.37 L691.4 563.17 L690.7 562.95 L690.0 563.25 L689.2 563.35 L688.5 563.34 L687.7 563.44 L687.0 563.24 L686.3 563.39 L685.5 562.99 L684.8 563.00 L684.0 563.43 L683.3 562.94 L682.6 562.79 L681.8 562.93 L681.1 563.23 L680.3 563.15 L679.6 563.10 L678.9 562.98 L678.1 563.39 L677.4 563.33 L676.6 562.82 L675.9 562.87 L675.2 563.10 L674.4 563.11 L673.7 563.37 L673.0 563.27 L672.2 563.39 L671.5 562.97 L670.7 562.88 L670.0 563.20 L669.3 563.17 L668.5 562.84 L667.8 563.12 L667.0 563.28 L666.3 562.89 L665.6 563.09 L664.8 563.35 L664.1 563.23 L663.3 563.02 L662.6 562.95 L661.9 563.15 L661.1 562.88 L660.4 563.23 L659.6 563.13 L658.9 562.78 L658.2 563.28 L657.4 562.90 L656.7 562.65 L656.0 562.86 L655.2 562.64 L654.5 562.56 L653.7 562.21 L653.0 562.24 L652.3 562.58 L651.5 562.14 L650.8 561.82 L650.0 561.60 L649.3 561.94 L648.6 562.01 L647.8 561.31 L647.1 560.97 L646.3 561.09 L645.6 561.08 L644.9 561.70 L644.1 561.69 L643.4 561.23 L642.7 561.15 L641.9 560.91 L641.2 560.78 L640.4 560.70 L639.7 560.62 L639.0 560.55 L638.2 560.55 L637.5 560.54 L636.7 560.54 L636.0 560.54 L635.3 560.54 L634.5 560.53 L633.8 560.53 L633.0 560.53 L632.3 560.53 L631.6 560.52 L630.8 560.52 L630.1 560.52 L629.3 560.52 L628.6 560.52 L627.9 560.51 L627.1 560.51 L626.4 560.51 L625.7 560.51 L624.9 560.51 L624.2 560.51 L623.4 560.51 L622.7 560.52 L622.0 560.52 L621.2 560.52 L620.5 560.52 L619.7 560.53 L619.0 560.53 L618.3 560.53 L617.5 560.53 L616.8 560.54 L616.0 560.54 L615.3 560.54 L614.6 560.54 L613.8 560.55 L613.1 560.56 L612.3 560.63 L611.6 560.70 L610.9 560.77 L610.1 560.84 L609.4 561.06 L608.7 561.20 L607.9 561.84 L607.2 561.79 L606.4 561.40 L605.7 561.20 L605.0 561.04 L604.2 560.99 L603.5 561.19 L602.7 561.30 L602.0 561.63 L601.3 562.01 L600.5 562.27 L599.8 562.45 L599.0 562.07 L598.3 562.32 L597.6 562.43 L596.8 563.04 L596.1 562.56 L595.4 562.69 L594.6 562.65 L593.9 562.83 L593.1 563.28 L592.4 562.78 L591.7 563.38 L590.9 563.41 L590.2 563.29 L589.4 563.43 L588.7 562.83 L588.0 563.00 L587.2 562.78 L586.5 563.29 L585.7 562.80 L585.0 562.78 L584.3 563.06 L583.5 563.06 L582.8 562.83 L582.0 562.89 L581.3 563.31 L580.6 562.93 L579.8 563.21 L579.1 563.08 L578.4 563.24 L577.6 563.19 L576.9 563.00 L576.1 563.18 L575.4 562.88 L574.7 562.83 L573.9 563.20 L573.2 563.43 L572.4 562.96 L571.7 563.06 L571.0 563.06 L570.2 562.91 L569.5 563.36 L568.7 562.92 L568.0 562.87 L567.3 563.19 L566.5 563.02 L565.8 562.78 L565.0 563.42 L564.3 562.83 L563.6 563.41 L562.8 563.07 L562.1 563.37 L561.4 562.92 L560.6 563.07 L559.9 563.14 L559.1 563.34 L558.4 563.08 L557.7 562.81 L556.9 563.30 L556.2 563.26 L555.4 563.31 L554.7 562.77 L554.0 562.71 L553.2 563.21 L552.5 562.74 L551.7 562.78 L551.0 562.98 L550.3 562.39 L549.5 562.56 L548.8 562.02 L548.1 562.22 L547.3 561.79 L546.6 561.98 L545.8 561.62 L545.1 561.45 L544.4 561.36 L543.6 561.08 L542.9 561.09 L542.1 561.37 L541.4 561.31 L540.7 561.54 L539.9 561.48 L539.2 561.15 L538.4 560.91 L537.7 560.78 L537.0 560.70 L536.2 560.62 L535.5 560.55 L534.7 560.55 L534.0 560.54 L533.3 560.54 L532.5 560.54 L531.8 560.54 L531.1 560.53 L530.3 560.53 L529.6 560.53 L528.8 560.53 L528.1 560.52 L527.4 560.52 L526.6 560.52 L525.9 560.52 L525.1 560.52 L524.4 560.51 L523.7 560.51 L522.9 560.51 L522.2 560.51 L521.4 560.51 L520.7 560.51 L520.0 560.51 L519.2 560.52 L518.5 560.52 L517.7 560.52 L517.0 560.52 L516.3 560.53 L515.5 560.53 L514.8 560.53 L514.1 560.53 L513.3 560.54 L512.6 560.54 L511.8 560.54 L511.1 560.54 L510.4 560.55 L509.6 560.56 L508.9 560.63 L508.1 560.70 L507.4 560.77 L506.7 560.84 L505.9 561.06 L505.2 561.00 L504.4 561.68 L503.7 561.48 L503.0 561.27 L502.2 561.20 L501.5 561.04 L500.7 560.99 L500.0 561.19 L499.3 561.46 L498.5 561.39 L497.8 561.67 L497.1 562.28 L496.3 562.37 L495.6 562.02 L494.8 562.55 L494.1 562.41 L493.4 563.09 L492.6 562.69 L491.9 563.12 L491.1 562.71 L490.4 562.72 L489.7 562.89 L488.9 562.87 L488.2 562.79 L487.4 563.31 L486.7 563.20 L486.0 563.02 L485.2 563.04 L484.5 563.08 L483.8 562.80 L483.0 563.43 L482.3 563.43 L481.5 563.14 L480.8 562.80 L480.1 563.28 L479.3 562.81 L478.6 563.02 L477.8 563.00 L477.1 563.31 L476.4 563.29 L475.6 562.91 L474.9 563.13 L474.1 562.96 L473.4 563.46 L472.7 563.12 L471.9 562.81 L471.2 563.24 L470.4 563.33 L469.7 562.99 L469.0 563.29 L468.2 563.22 L467.5 562.97 L466.8 563.41 L466.0 562.95 L465.3 562.81 L464.5 562.79 L463.8 563.33 L463.1 562.77 L462.3 563.00 L461.6 563.39 L460.8 563.07 L460.1 563.03 L459.4 563.30 L458.6 562.87 L457.9 562.80 L457.1 562.96 L456.4 562.71 L455.7 562.93 L454.9 562.96 L454.2 562.71 L453.4 563.34 L452.7 562.91 L452.0 563.38 L451.2 563.25 L450.5 562.84 L449.8 562.54 L449.0 563.13 L448.3 562.66 L447.5 562.98 L446.8 562.49 L446.1 562.21 L445.3 562.62 L444.6 562.37 L443.8 561.88 L443.1 561.81 L442.4 561.62 L441.6 561.84 L440.9 561.27 L440.1 561.23 L439.4 561.09 L438.7 560.98 L437.9 561.81 L437.2 561.46 L436.5 561.52 L435.7 561.15 L435.0 560.91 L434.2 560.78 L433.5 560.70 L432.8 560.62 L432.0 560.55 L431.3 560.55 L430.5 560.54 L429.8 560.54 L429.1 560.54 L428.3 560.54 L427.6 560.53 L426.8 560.53 L426.1 560.53 L425.4 560.53 L424.6 560.52 L423.9 560.52 L423.1 560.52 L422.4 560.52 L421.7 560.52 L420.9 560.51 L420.2 560.51 L419.5 560.51 L418.7 560.51 L418.0 560.51 L417.2 560.51 L416.5 560.51 L415.8 560.52 L415.0 560.52 L414.3 560.52 L413.5 560.52 L412.8 560.53 L412.1 560.53 L411.3 560.53 L410.6 560.53 L409.8 560.54 L409.1 560.54 L408.4 560.54 L407.6 560.54 L406.9 560.55 L406.1 560.56 L405.4 560.63 L404.7 560.70 L403.9 560.77 L403.2 560.84 L402.5 561.06 L401.7 560.94 L401.0 561.63 L400.2 561.34 L399.5 561.34 L398.8 561.20 L398.0 561.04 L397.3 560.99 L396.5 561.19 L395.8 561.50 L395.1 561.58 L394.3 561.47 L393.6 561.80 L392.8 562.20 L392.1 561.99 L391.4 562.58 L390.6 562.42 L389.9 562.61 L389.1 563.10 L388.4 563.05 L387.7 562.93 L386.9 563.12 L386.2 563.13 L385.5 563.15 L384.7 562.82 L384.0 562.89 L383.2 563.32 L382.5 563.38 L381.8 562.73 L381.0 563.07 L380.3 563.24 L379.5 562.76 L378.8 563.34 L378.1 563.06 L377.3 562.93 L376.6 562.91 L375.8 563.20 L375.1 562.85 L374.4 562.96 L373.6 563.01 L372.9 563.14 L372.2 563.07 L371.4 563.40 L370.7 562.97 L369.9 562.85 L369.2 562.85 L368.5 562.89 L367.7 563.50 L367.0 562.96 L366.2 563.43 L365.5 562.91 L364.8 563.06 L364.0 562.99 L363.3 562.96 L362.5 563.29 L361.8 563.01 L361.1 562.85 L360.3 562.79 L359.6 563.20 L358.8 563.06 L358.1 562.78 L357.4 563.12 L356.6 563.37 L355.9 563.30 L355.2 563.39 L354.4 562.85 L353.7 562.90 L352.9 563.36 L352.2 563.29 L351.5 562.73 L350.7 562.99 L350.0 563.10 L349.2 562.96 L348.5 562.88 L347.8 563.13 L347.0 562.65 L346.3 563.03 L345.5 563.04 L344.8 562.63 L344.1 562.53 L343.3 562.54 L342.6 562.09 L341.8 562.58 L341.1 562.33 L340.4 562.07 L339.6 561.69 L338.9 561.84 L338.2 561.73 L337.4 561.79 L336.7 561.12 L335.9 561.09 L335.2 561.63 L334.5 561.49 L333.7 561.94 L333.0 561.18 L332.2 561.15 L331.5 560.91 L330.8 560.78 L330.0 560.70 L329.3 560.62 L328.5 560.55 L327.8 560.55 L327.1 560.54 L326.3 560.54 L325.6 560.54 L324.9 560.54 L324.1 560.53 L323.4 560.53 L322.6 560.53 L321.9 560.53 L321.2 560.52 L320.4 560.52 L319.7 560.52 L318.9 560.52 L318.2 560.52 L317.5 560.51 L316.7 560.51 L316.0 560.51 L315.2 560.51 L314.5 560.51 L313.8 560.51 L313.0 560.51 L312.3 560.52 L311.5 560.52 L310.8 560.52 L310.1 560.52 L309.3 560.53 L308.6 560.53 L307.9 560.53 L307.1 560.53 L306.4 560.54 L305.6 560.54 L304.9 560.54 L304.2 560.54 L303.4 560.55 L302.7 560.56 L301.9 560.63 L301.2 560.70 L300.5 560.77 L299.7 560.84 L299.0 561.06 L298.2 561.01 L297.5 561.47 L296.8 561.37 L296.0 561.49 L295.3 561.20 L294.5 561.04 L293.8 560.99 L293.1 561.19 L292.3 561.24 L291.6 561.26 L290.9 561.67 L290.1 561.82 L289.4 561.85 L288.6 562.38 L287.9 562.57 L287.2 562.51 L286.4 563.08 L285.7 562.60 L284.9 562.69 L284.2 562.72 L283.5 562.63 L282.7 563.00 L282.0 563.19 L281.2 562.71 L280.5 563.20 L279.8 563.16 L279.0 563.31 L278.3 562.98 L277.5 562.76 L276.8 563.22 L276.1 563.37 L275.3 563.32 L274.6 563.33 L273.9 563.12 L273.1 563.32 L272.4 563.20 L271.6 563.35 L270.9 563.22 L270.2 562.87 L269.4 563.00 L268.7 563.39 L267.9 563.24 L267.2 563.15 L266.5 562.95 L265.7 562.81 L265.0 563.07 L264.2 562.98 L263.5 563.16 L262.8 563.15 L262.0 563.06 L261.3 563.04 L260.6 563.46 L259.8 563.16 L259.1 563.45 L258.3 563.08 L257.6 563.08 L256.9 562.93 L256.1 563.22 L255.4 563.34 L254.6 562.86 L253.9 563.26 L253.2 562.82 L252.4 562.97 L251.7 563.17 L250.9 563.30 L250.2 563.40 L249.5 563.06 L248.7 563.29 L248.0 563.00 L247.2 562.77 L246.5 563.02 L245.8 563.07 L245.0 562.69 L244.3 562.64 L243.6 562.69 L242.8 562.71 L242.1 562.66 L241.3 562.53 L240.6 562.43 L239.9 562.36 L239.1 562.17 L238.4 562.60 L237.6 562.07 L236.9 562.32 L236.2 562.20 L235.4 562.04 L234.7 561.98 L233.9 561.43 L233.2 560.98 L232.5 561.09 L231.7 561.44 L231.0 561.81 L230.2 561.47 L229.5 561.68 L228.8 561.15 L228.0 560.91 L227.3 560.78 L226.6 560.70 L225.8 560.62 L225.1 560.55 L224.3 560.55 L223.6 560.54 L222.9 560.54 L222.1 560.54 L221.4 560.54 L220.6 560.53 L219.9 560.53 L219.2 560.53 L218.4 560.53 L217.7 560.52 L216.9 560.52 L216.2 560.52 L215.5 560.52 L214.7 560.52 L214.0 560.51 L213.3 560.51 L212.5 560.51 L211.8 560.51 L211.0 560.51 L210.3 560.51 L209.6 560.51 L208.8 560.52 L208.1 560.52 L207.3 560.52 L206.6 560.52 L205.9 560.53 L205.1 560.53 L204.4 560.53 L203.6 560.53 L202.9 560.54 L202.2 560.54 L201.4 560.54 L200.7 560.54 L199.9 560.55 L199.2 560.56 L198.5 560.63 L197.7 560.70 L197.0 560.77 L196.3 560.84 L195.5 561.06 L194.8 561.01 L194.0 561.69 L193.3 561.35 L192.6 561.69 L191.8 561.20 L191.1 561.04 L190.3 560.99 L189.6 561.19 L188.9 561.74 L188.1 561.61 L187.4 561.69 L186.6 561.95 L185.9 561.81 L185.2 562.17 L184.4 562.33 L183.7 562.55 L182.9 562.98 L182.2 562.80 L181.5 563.17 L180.7 563.22 L180.0 562.68 L179.3 563.13 L178.5 563.30 L177.8 563.18 L177.0 562.89 L176.3 563.03 L175.6 562.82 L174.8 563.39 L174.1 562.92 L173.3 563.35 L172.6 563.40 L171.9 563.12 L171.1 563.23 L170.4 563.11 L169.6 563.07 L168.9 563.29 L168.2 563.12 L167.4 562.96 L166.7 563.16 L166.0 563.32 L165.2 563.14 L164.5 563.17 L163.7 563.12 L163.0 563.35 L162.3 562.92 L161.5 562.81 L160.8 563.17 L160.0 563.44 L159.3 563.43 L158.6 563.11 L157.8 563.42 L157.1 563.08 L156.3 563.19 L155.6 562.98 L154.9 562.91 L154.1 563.37 L153.4 563.41 L152.6 563.21 L151.9 562.76 L151.2 563.13 L150.4 563.20 L149.7 563.31 L149.0 563.29 L148.2 562.83 L147.5 562.84 L146.7 563.37 L146.0 562.98 L145.3 563.26 L144.5 563.25 L143.8 563.03 L143.0 563.23 L142.3 563.14 L141.6 563.24 L140.8 562.96 L140.1 563.20 L139.3 562.65 L138.6 562.61 L137.9 562.64 L137.1 563.01 L136.4 562.51 L135.6 562.56 L134.9 562.15 L134.2 561.86 L133.4 562.08 L132.7 562.11 L132.0 562.04 L131.2 562.01 L130.5 561.28 L129.7 561.48 L129.0 561.09 L128.3 561.49 L127.5 561.42 L126.8 561.77 L126.0 561.73 L125.3 561.15 L124.6 560.91 L123.8 560.78 L123.1 560.70 L122.3 560.62 L121.6 560.55 L120.9 560.55 L120.1 560.54 L119.4 560.54 L118.6 560.54 L117.9 560.54 L117.2 560.53 L116.4 560.53 L115.7 560.53 L115.0 560.53 L114.2 560.52 L113.5 560.52 L112.7 560.52 L112.0 560.52 L111.3 560.52 L110.5 560.51 L109.8 560.51 L109.0 560.51 L108.3 560.51 L107.6 560.51 L106.8 560.51 L106.1 560.51 L105.3 560.52 L104.6 560.52 L103.9 560.52 L103.1 560.52 L102.4 560.53 L101.7 560.53 L100.9 560.53 L100.2 560.53 L99.4 560.54 L98.7 560.54 L98.0 560.54 L97.2 560.54 L96.5 560.55 L95.7 560.56 L95.0 560.63 L94.3 560.70 L93.5 560.77 L92.8 560.84 L92.0 561.06 L91.3 560.94 L90.6 561.24 L89.8 561.83 L89.1 561.12 L88.3 561.20 L87.6 561.04 L86.9 560.99 L86.1 561.19 L85.4 561.23 L84.7 561.33 L83.9 561.80 L83.2 562.34 L82.4 561.88 L81.7 562.19 L81.0 562.20 L80.2 562.86 L79.5 562.65 L78.7 562.56 L78.0 562.54 L77.3 562.66 L76.5 562.63 L75.8 563.07 L75.0 562.95 L74.3 563.27 L73.6 563.27 L72.8 562.76 L72.1 563.16 L71.3 563.21 L70.6 563.13 L69.9 563.03 L69.1 562.93 L68.4 563.09 L67.7 562.91 L66.9 562.86 L66.2 563.38 L65.4 563.05 L64.7 563.37 L64.0 563.39 L63.2 563.08 L62.5 563.38 L61.7 562.95 L61.0 563.32 L60.3 562.87 L59.5 563.11 L58.8 563.26 L58.0 562.99 L57.3 563.49 L56.6 563.29 L55.8 563.26 L55.1 563.45 L54.4 563.11 L53.6 563.20 L52.9 563.00 L52.1 563.17 L51.4 563.23 L50.7 563.10 L49.9 563.29 L49.2 562.83 L48.4 562.95 L47.7 563.35 L47.0 563.14 L46.2 563.22 L45.5 562.94 L44.7 563.13 L44.0 563.02 L43.3 562.86 L42.5 562.75 L41.8 562.96 L41.0 563.10 L40.3 563.26 L39.6 562.77 L38.8 562.88 L38.1 562.71 L37.4 562.91 L36.6 563.23 L35.9 562.66 L35.1 563.03 L34.4 562.45 L33.7 562.62 L32.9 562.55 L32.2 562.33 L31.4 562.01 L30.7 561.94 Z" fill="#0cf80c" stroke="#0cf80c" stroke-width="0.3"/>
<path d="M1065.4 360.4 V583.3" stroke="#606060" stroke-width="0.9"/>
<rect x="0" y="599.3" width="1080" height="8" fill="#f0f0f0"/>
<rect x="1.5" y="599" width="1078.5" height="0.7" fill="#b4b8be"/>
<rect x="0" y="0" width="1.5" height="607" fill="#aab4bc"/>
<text x="2" y="610.6" font-family="'Liberation Sans', sans-serif" font-size="8.6" font-weight="normal" fill="#111" textLength="166.5" lengthAdjust="spacingAndGlyphs" >Right-Click to manually enter Horizontal Axis Limits</text>
</svg>
</body></html>
